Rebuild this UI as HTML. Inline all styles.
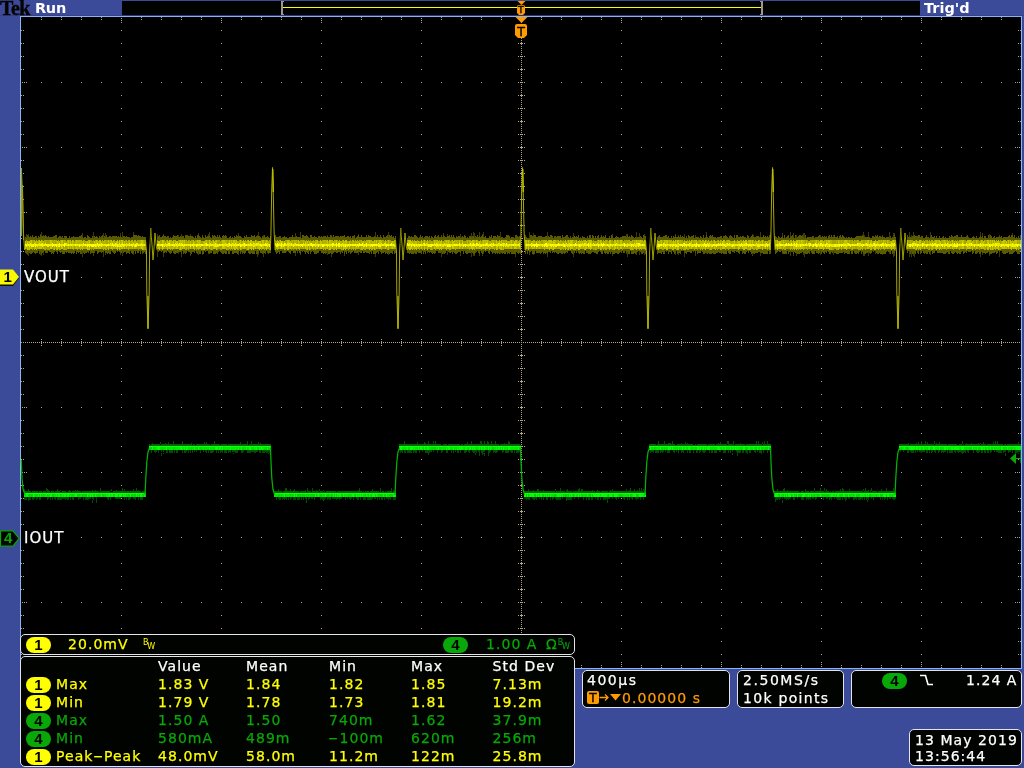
<!DOCTYPE html>
<html lang="en"><head><meta charset="utf-8"><title>Tek Run - Trig'd</title>
<style>
html,body{margin:0;padding:0}
body{width:1024px;height:768px;background:#3c4a9a;position:relative;overflow:hidden;
 font-family:"DejaVu Sans","Liberation Sans",sans-serif;font-size:14px;line-height:18px;color:#fff;letter-spacing:1.05px;-webkit-text-stroke:.25px currentColor}
#gfx{position:absolute;left:0;top:0}
.t{position:absolute;white-space:nowrap}
.y{color:#ffff00}.g{color:#08a808}.o{color:#ff9a00}
.box{position:absolute;background:#000300;border:1px solid #e4e4e8;border-radius:5px;box-sizing:border-box}
.pill{position:absolute;width:25px;height:16px;border-radius:8px;color:#000;text-align:center;line-height:15px;font-size:15px;letter-spacing:0;-webkit-text-stroke:0;font-family:"Liberation Sans","DejaVu Sans",sans-serif;font-weight:bold}
.pill.y{background:#ffff00;color:#000}.pill.g{background:#08a808;color:#000}
.tek{font-family:"Liberation Serif","DejaVu Serif",serif;font-weight:bold;font-size:20px;color:#060400;letter-spacing:-.6px;-webkit-text-stroke:.4px #060400}
.n{font-family:"Liberation Sans","DejaVu Sans",sans-serif;font-weight:bold;font-size:15px;letter-spacing:0;-webkit-text-stroke:0}
.bb{font-weight:bold;font-size:14.5px;letter-spacing:-.3px;-webkit-text-stroke:0}
.b{-webkit-text-stroke:.35px currentColor}
#txt{position:absolute;left:0;top:0;width:1024px;height:768px;will-change:transform}
.hy{display:inline-block;transform:scaleX(2);margin:0 2.2px}
</style></head><body>
<svg id="gfx" width="1024" height="768" viewBox="0 0 1024 768" shape-rendering="crispEdges">
<!-- top bar -->
<rect x="122" y="1" width="798" height="14" fill="#000300"/>
<rect x="0" y="15" width="1024" height="1" fill="#34408e"/>
<rect x="122" y="15" width="798" height="1" fill="#2a3480"/>
<rect x="283" y="7" width="478" height="1" fill="#ffff00"/>
<path d="M281 1h3v1h-1v12h1v1h-3z" fill="#a09494"/>
<path d="M763 1h-3v1h1v12h-1v1h3z" fill="#a09494"/>
<!-- graticule frame -->
<rect x="20" y="16" width="1002" height="653" fill="#86b6f6"/>
<rect x="21" y="17" width="1000" height="651" fill="#000"/>
<g stroke="#b4a680" stroke-width="1" fill="none">
<path d="M121.5 30V660" stroke-dasharray="1 12"/>
<path d="M121.5 18V23" stroke-dasharray="1 1"/>
<path d="M121.5 662V667" stroke-dasharray="1 1"/>
<path d="M221.5 30V660" stroke-dasharray="1 12"/>
<path d="M221.5 18V23" stroke-dasharray="1 1"/>
<path d="M221.5 662V667" stroke-dasharray="1 1"/>
<path d="M321.5 30V660" stroke-dasharray="1 12"/>
<path d="M321.5 18V23" stroke-dasharray="1 1"/>
<path d="M321.5 662V667" stroke-dasharray="1 1"/>
<path d="M421.5 30V660" stroke-dasharray="1 12"/>
<path d="M421.5 18V23" stroke-dasharray="1 1"/>
<path d="M421.5 662V667" stroke-dasharray="1 1"/>
<path d="M621.5 30V660" stroke-dasharray="1 12"/>
<path d="M621.5 18V23" stroke-dasharray="1 1"/>
<path d="M621.5 662V667" stroke-dasharray="1 1"/>
<path d="M721.5 30V660" stroke-dasharray="1 12"/>
<path d="M721.5 18V23" stroke-dasharray="1 1"/>
<path d="M721.5 662V667" stroke-dasharray="1 1"/>
<path d="M821.5 30V660" stroke-dasharray="1 12"/>
<path d="M821.5 18V23" stroke-dasharray="1 1"/>
<path d="M821.5 662V667" stroke-dasharray="1 1"/>
<path d="M921.5 30V660" stroke-dasharray="1 12"/>
<path d="M921.5 18V23" stroke-dasharray="1 1"/>
<path d="M921.5 662V667" stroke-dasharray="1 1"/>
<path d="M41 82.5H1010" stroke-dasharray="1 19"/>
<path d="M22 82.5H27" stroke-dasharray="1 1"/>
<path d="M1015 82.5H1020" stroke-dasharray="1 1"/>
<path d="M41 147.5H1010" stroke-dasharray="1 19"/>
<path d="M22 147.5H27" stroke-dasharray="1 1"/>
<path d="M1015 147.5H1020" stroke-dasharray="1 1"/>
<path d="M41 212.5H1010" stroke-dasharray="1 19"/>
<path d="M22 212.5H27" stroke-dasharray="1 1"/>
<path d="M1015 212.5H1020" stroke-dasharray="1 1"/>
<path d="M41 277.5H1010" stroke-dasharray="1 19"/>
<path d="M22 277.5H27" stroke-dasharray="1 1"/>
<path d="M1015 277.5H1020" stroke-dasharray="1 1"/>
<path d="M41 407.5H1010" stroke-dasharray="1 19"/>
<path d="M22 407.5H27" stroke-dasharray="1 1"/>
<path d="M1015 407.5H1020" stroke-dasharray="1 1"/>
<path d="M41 472.5H1010" stroke-dasharray="1 19"/>
<path d="M22 472.5H27" stroke-dasharray="1 1"/>
<path d="M1015 472.5H1020" stroke-dasharray="1 1"/>
<path d="M41 537.5H1010" stroke-dasharray="1 19"/>
<path d="M22 537.5H27" stroke-dasharray="1 1"/>
<path d="M1015 537.5H1020" stroke-dasharray="1 1"/>
<path d="M41 602.5H1010" stroke-dasharray="1 19"/>
<path d="M22 602.5H27" stroke-dasharray="1 1"/>
<path d="M1015 602.5H1020" stroke-dasharray="1 1"/>
<path d="M41 17.5H102" stroke-dasharray="1 19"/>
<path d="M141 17.5H202" stroke-dasharray="1 19"/>
<path d="M241 17.5H302" stroke-dasharray="1 19"/>
<path d="M341 17.5H402" stroke-dasharray="1 19"/>
<path d="M441 17.5H502" stroke-dasharray="1 19"/>
<path d="M541 17.5H602" stroke-dasharray="1 19"/>
<path d="M641 17.5H702" stroke-dasharray="1 19"/>
<path d="M741 17.5H802" stroke-dasharray="1 19"/>
<path d="M841 17.5H902" stroke-dasharray="1 19"/>
<path d="M941 17.5H1002" stroke-dasharray="1 19"/>
<path d="M41 19.5H102" stroke-dasharray="1 19"/>
<path d="M141 19.5H202" stroke-dasharray="1 19"/>
<path d="M241 19.5H302" stroke-dasharray="1 19"/>
<path d="M341 19.5H402" stroke-dasharray="1 19"/>
<path d="M441 19.5H502" stroke-dasharray="1 19"/>
<path d="M541 19.5H602" stroke-dasharray="1 19"/>
<path d="M641 19.5H702" stroke-dasharray="1 19"/>
<path d="M741 19.5H802" stroke-dasharray="1 19"/>
<path d="M841 19.5H902" stroke-dasharray="1 19"/>
<path d="M941 19.5H1002" stroke-dasharray="1 19"/>
<path d="M41 665.5H102" stroke-dasharray="1 19"/>
<path d="M141 665.5H202" stroke-dasharray="1 19"/>
<path d="M241 665.5H302" stroke-dasharray="1 19"/>
<path d="M341 665.5H402" stroke-dasharray="1 19"/>
<path d="M441 665.5H502" stroke-dasharray="1 19"/>
<path d="M541 665.5H602" stroke-dasharray="1 19"/>
<path d="M641 665.5H702" stroke-dasharray="1 19"/>
<path d="M741 665.5H802" stroke-dasharray="1 19"/>
<path d="M841 665.5H902" stroke-dasharray="1 19"/>
<path d="M941 665.5H1002" stroke-dasharray="1 19"/>
<path d="M41 667.5H102" stroke-dasharray="1 19"/>
<path d="M141 667.5H202" stroke-dasharray="1 19"/>
<path d="M241 667.5H302" stroke-dasharray="1 19"/>
<path d="M341 667.5H402" stroke-dasharray="1 19"/>
<path d="M441 667.5H502" stroke-dasharray="1 19"/>
<path d="M541 667.5H602" stroke-dasharray="1 19"/>
<path d="M641 667.5H702" stroke-dasharray="1 19"/>
<path d="M741 667.5H802" stroke-dasharray="1 19"/>
<path d="M841 667.5H902" stroke-dasharray="1 19"/>
<path d="M941 667.5H1002" stroke-dasharray="1 19"/>
<path d="M21.5 30V70" stroke-dasharray="1 12"/>
<path d="M21.5 95V135" stroke-dasharray="1 12"/>
<path d="M21.5 160V200" stroke-dasharray="1 12"/>
<path d="M21.5 225V265" stroke-dasharray="1 12"/>
<path d="M21.5 290V330" stroke-dasharray="1 12"/>
<path d="M21.5 355V395" stroke-dasharray="1 12"/>
<path d="M21.5 420V460" stroke-dasharray="1 12"/>
<path d="M21.5 485V525" stroke-dasharray="1 12"/>
<path d="M21.5 550V590" stroke-dasharray="1 12"/>
<path d="M21.5 615V655" stroke-dasharray="1 12"/>
<path d="M23.5 30V70" stroke-dasharray="1 12"/>
<path d="M23.5 95V135" stroke-dasharray="1 12"/>
<path d="M23.5 160V200" stroke-dasharray="1 12"/>
<path d="M23.5 225V265" stroke-dasharray="1 12"/>
<path d="M23.5 290V330" stroke-dasharray="1 12"/>
<path d="M23.5 355V395" stroke-dasharray="1 12"/>
<path d="M23.5 420V460" stroke-dasharray="1 12"/>
<path d="M23.5 485V525" stroke-dasharray="1 12"/>
<path d="M23.5 550V590" stroke-dasharray="1 12"/>
<path d="M23.5 615V655" stroke-dasharray="1 12"/>
<path d="M1018.5 30V70" stroke-dasharray="1 12"/>
<path d="M1018.5 95V135" stroke-dasharray="1 12"/>
<path d="M1018.5 160V200" stroke-dasharray="1 12"/>
<path d="M1018.5 225V265" stroke-dasharray="1 12"/>
<path d="M1018.5 290V330" stroke-dasharray="1 12"/>
<path d="M1018.5 355V395" stroke-dasharray="1 12"/>
<path d="M1018.5 420V460" stroke-dasharray="1 12"/>
<path d="M1018.5 485V525" stroke-dasharray="1 12"/>
<path d="M1018.5 550V590" stroke-dasharray="1 12"/>
<path d="M1018.5 615V655" stroke-dasharray="1 12"/>
<path d="M1020.5 30V70" stroke-dasharray="1 12"/>
<path d="M1020.5 95V135" stroke-dasharray="1 12"/>
<path d="M1020.5 160V200" stroke-dasharray="1 12"/>
<path d="M1020.5 225V265" stroke-dasharray="1 12"/>
<path d="M1020.5 290V330" stroke-dasharray="1 12"/>
<path d="M1020.5 355V395" stroke-dasharray="1 12"/>
<path d="M1020.5 420V460" stroke-dasharray="1 12"/>
<path d="M1020.5 485V525" stroke-dasharray="1 12"/>
<path d="M1020.5 550V590" stroke-dasharray="1 12"/>
<path d="M1020.5 615V655" stroke-dasharray="1 12"/>
<path d="M521.5 18V667" stroke-dasharray="1 1"/>
<path d="M21 342.5H1020" stroke-dasharray="1 1"/>
<path d="M518.5 30V330" stroke-dasharray="1 12"/>
<path d="M518.5 355V660" stroke-dasharray="1 12"/>
<path d="M520.5 30V330" stroke-dasharray="1 12"/>
<path d="M520.5 355V660" stroke-dasharray="1 12"/>
<path d="M521.5 30V330" stroke-dasharray="1 12"/>
<path d="M521.5 355V660" stroke-dasharray="1 12"/>
<path d="M522.5 30V330" stroke-dasharray="1 12"/>
<path d="M522.5 355V660" stroke-dasharray="1 12"/>
<path d="M524.5 30V330" stroke-dasharray="1 12"/>
<path d="M524.5 355V660" stroke-dasharray="1 12"/>
<path d="M41 339.5H502" stroke-dasharray="1 19"/>
<path d="M541 339.5H1010" stroke-dasharray="1 19"/>
<path d="M41 341.5H502" stroke-dasharray="1 19"/>
<path d="M541 341.5H1010" stroke-dasharray="1 19"/>
<path d="M41 342.5H502" stroke-dasharray="1 19"/>
<path d="M541 342.5H1010" stroke-dasharray="1 19"/>
<path d="M41 343.5H502" stroke-dasharray="1 19"/>
<path d="M541 343.5H1010" stroke-dasharray="1 19"/>
<path d="M41 345.5H502" stroke-dasharray="1 19"/>
<path d="M541 345.5H1010" stroke-dasharray="1 19"/>
</g>
<g shape-rendering="auto">
<g shape-rendering="crispEdges" fill="none" stroke-width="1" transform="translate(.5 0)">
<path d="M26 234V254M27 235V255M28 234V256M40 234V255M41 232V256M43 235V255M82 233V257M93 232V256M103 233V257M105 233V255M120 233V255M122 232V256M133 232V255M157 234V257M163 234V257M178 235V254M181 234V257M190 234V256M198 233V255M202 235V255M208 234V254M209 232V254M238 233V255M257 235V257M258 232V255M263 235V257M295 233V256M300 232V255M327 235V255M331 235V257M344 235V256M358 234V255M375 232V257M388 232V255M441 235V257M443 233V254M447 234V255M460 234V256M471 233V257M473 232V256M474 233V256M479 232V256M482 234V256M483 232V254M500 232V254M515 235V257M529 232V255M533 233V255M547 232V257M573 233V257M601 235V254M612 234V256M626 234V254M627 234V257M636 232V255M639 233V255M644 234V255M675 234V255M678 235V255M684 234V257M695 235V256M706 232V254M752 234V256M753 235V254M760 232V256M770 232V254M782 233V254M790 232V256M793 233V256M796 235V256M803 233V255M804 233V257M820 235V255M833 235V255M863 232V256M864 235V256M868 232V256M875 235V254M882 235V255M889 232V254M893 233V257M894 233V256M909 232V257M911 235V257M913 232V256M914 235V257M930 232V255M980 232V257M982 233V255M989 234V256M999 235V257M1012 233V254" stroke="#3c3c00"/>
<path d="M25 237V253M26 238V253M27 235V254M28 236V252M29 237V253M30 236V254M31 237V254M32 235V253M33 237V252M34 237V253M35 236V254M36 236V253M37 238V253M38 236V251M39 237V254M40 235V252M41 236V254M42 236V253M43 236V252M44 236V251M45 235V253M46 236V253M47 237V253M48 236V251M49 237V252M50 237V252M51 237V254M52 237V253M53 236V254M54 236V252M55 235V251M56 235V252M57 238V254M58 237V251M59 236V252M60 236V253M61 237V252M62 236V254M63 238V254M64 236V254M65 236V252M66 236V253M67 238V252M68 238V253M69 236V253M70 238V253M71 237V254M72 237V253M73 236V254M74 237V253M75 237V251M76 237V254M77 237V252M78 237V253M79 236V252M80 236V254M81 235V254M82 237V251M83 238V253M84 237V254M85 237V253M86 238V253M87 235V252M88 236V253M89 237V251M90 238V254M91 238V253M92 236V253M93 238V253M94 236V253M95 237V251M96 236V251M97 237V254M98 238V253M99 236V252M100 237V252M101 236V253M102 235V252M103 238V252M104 236V251M105 237V253M106 235V253M107 237V254M108 237V253M109 236V254M110 236V254M111 237V251M112 236V252M113 236V253M114 236V254M115 236V253M116 236V251M117 237V252M118 236V251M119 237V252M120 236V253M121 237V253M122 238V251M123 236V253M124 236V252M125 237V252M126 236V254M127 237V253M128 237V253M129 237V254M130 238V251M131 237V253M132 237V254M133 235V253M134 235V251M135 235V254M136 235V251M137 236V253M138 235V253M139 236V251M140 236V254M141 237V251M142 236V254M143 237V253M144 237V252M145 237V254M157 237V251M158 236V252M159 235V251M160 237V251M161 237V252M162 236V251M163 235V253M164 236V253M165 236V252M166 237V253M167 236V251M168 236V252M169 238V253M170 237V254M171 238V253M172 237V251M173 235V253M174 236V254M175 236V254M176 236V253M177 235V253M178 237V252M179 237V252M180 236V252M181 237V254M182 236V251M183 236V254M184 238V253M185 235V254M186 235V253M187 235V251M188 236V252M189 236V252M190 236V253M191 236V254M192 236V252M193 237V252M194 238V253M195 236V251M196 238V253M197 235V254M198 235V252M199 236V254M200 237V254M201 238V251M202 235V254M203 237V254M204 238V251M205 235V252M206 237V251M207 236V251M208 236V253M209 236V254M210 237V253M211 238V253M212 235V251M213 236V254M214 235V254M215 236V254M216 237V253M217 235V254M218 237V252M219 235V251M220 237V252M221 238V253M222 236V254M223 235V254M224 236V253M225 235V254M226 236V254M227 238V251M228 238V254M229 237V254M230 236V251M231 238V251M232 237V254M233 238V254M234 236V253M235 237V253M236 235V253M237 236V254M238 236V253M239 236V251M240 236V254M241 237V252M242 238V254M243 238V253M244 236V254M245 237V253M246 235V251M247 237V251M248 237V253M249 237V254M250 237V254M251 235V253M252 236V254M253 236V254M254 235V254M255 237V251M256 236V254M257 236V254M258 236V253M259 236V251M260 237V253M261 238V253M262 236V254M263 237V253M264 235V253M265 237V254M266 237V251M267 236V253M268 237V254M269 238V253M270 236V253M275 235V252M276 237V254M277 237V253M278 237V252M279 236V254M280 236V251M281 238V251M282 237V253M283 237V253M284 236V253M285 237V253M286 237V252M287 238V251M288 238V252M289 237V253M290 237V254M291 237V251M292 235V251M293 237V253M294 237V253M295 237V253M296 236V251M297 237V253M298 237V251M299 237V253M300 237V254M301 238V251M302 235V252M303 235V251M304 236V252M305 236V254M306 235V252M307 236V253M308 237V254M309 238V251M310 235V254M311 235V252M312 237V251M313 237V252M314 236V254M315 237V254M316 237V254M317 238V253M318 236V253M319 236V251M320 237V251M321 236V253M322 237V253M323 236V254M324 236V253M325 236V254M326 237V253M327 236V251M328 237V254M329 237V254M330 235V253M331 236V254M332 237V254M333 235V253M334 237V252M335 236V252M336 236V253M337 236V253M338 236V252M339 237V252M340 236V254M341 236V252M342 236V253M343 236V251M344 235V254M345 237V252M346 237V254M347 236V251M348 236V253M349 237V252M350 236V254M351 238V253M352 236V252M353 236V251M354 235V253M355 238V253M356 237V253M357 236V253M358 235V252M359 237V252M360 237V253M361 235V253M362 237V251M363 237V253M364 237V253M365 237V252M366 235V253M367 237V253M368 235V253M369 236V254M370 236V252M371 237V254M372 237V251M373 237V254M374 236V254M375 237V254M376 237V253M377 235V252M378 237V254M379 237V251M380 235V252M381 237V254M382 238V253M383 235V253M384 237V252M385 237V254M386 236V253M387 235V254M388 237V253M389 235V254M390 236V253M391 235V253M392 237V254M393 236V251M394 238V254M395 236V253M407 238V253M408 236V253M409 236V254M410 237V253M411 236V254M412 237V254M413 237V254M414 235V253M415 235V254M416 236V254M417 237V252M418 238V253M419 237V253M420 235V253M421 237V254M422 236V251M423 238V254M424 237V252M425 236V254M426 236V251M427 236V253M428 237V252M429 236V253M430 238V252M431 236V253M432 237V254M433 238V253M434 236V254M435 235V253M436 237V251M437 236V251M438 235V253M439 237V253M440 237V253M441 236V252M442 237V254M443 235V253M444 236V254M445 237V253M446 237V251M447 236V251M448 236V252M449 235V253M450 237V253M451 235V252M452 237V254M453 235V252M454 237V253M455 238V254M456 236V254M457 237V253M458 236V252M459 236V252M460 238V253M461 237V251M462 236V251M463 237V254M464 235V251M465 236V253M466 238V254M467 237V254M468 238V253M469 236V253M470 236V253M471 237V252M472 236V253M473 236V254M474 238V254M475 236V253M476 237V252M477 235V251M478 237V253M479 236V254M480 237V251M481 236V253M482 235V254M483 237V252M484 237V251M485 236V252M486 238V251M487 238V251M488 238V253M489 236V254M490 237V251M491 235V252M492 238V254M493 236V253M494 236V253M495 236V254M496 237V253M497 235V254M498 236V253M499 236V254M500 238V252M501 237V253M502 237V254M503 238V253M504 238V254M505 237V254M506 235V252M507 235V254M508 235V253M509 236V254M510 238V252M511 237V254M512 237V254M513 237V254M514 238V254M515 235V254M516 235V252M517 236V253M518 237V254M519 236V253M520 237V254M525 235V254M526 237V251M527 238V254M528 238V251M529 238V253M530 235V252M531 235V251M532 236V254M533 236V254M534 235V254M535 235V251M536 237V253M537 237V253M538 236V253M539 236V253M540 236V254M541 236V253M542 237V252M543 237V254M544 237V253M545 236V254M546 236V253M547 237V254M548 236V252M549 237V252M550 235V253M551 235V251M552 236V253M553 238V252M554 236V253M555 236V252M556 237V253M557 236V254M558 236V254M559 236V253M560 236V253M561 238V254M562 235V254M563 237V253M564 237V254M565 236V253M566 235V252M567 235V253M568 237V251M569 238V251M570 236V251M571 238V253M572 237V254M573 237V251M574 236V253M575 237V251M576 236V253M577 237V251M578 235V253M579 238V254M580 237V253M581 238V254M582 236V253M583 237V254M584 237V254M585 238V251M586 238V253M587 236V253M588 238V254M589 235V254M590 235V254M591 238V253M592 235V252M593 236V252M594 238V253M595 236V253M596 238V254M597 236V254M598 235V252M599 238V251M600 237V252M601 235V254M602 237V254M603 236V251M604 237V253M605 235V254M606 238V253M607 238V254M608 238V254M609 236V252M610 238V254M611 235V252M612 236V254M613 238V254M614 238V254M615 237V253M616 236V253M617 237V254M618 237V254M619 238V253M620 237V252M621 237V253M622 236V251M623 236V253M624 236V253M625 236V251M626 237V253M627 235V252M628 237V254M629 236V254M630 237V251M631 235V254M632 236V254M633 237V254M634 238V253M635 237V254M636 238V253M637 237V252M638 237V251M639 237V251M640 236V252M641 237V254M642 238V254M643 235V253M644 236V251M645 236V254M657 237V254M658 236V253M659 235V253M660 237V253M661 237V254M662 237V252M663 236V254M664 236V254M665 235V251M666 235V252M667 237V251M668 236V254M669 238V252M670 238V252M671 236V254M672 238V251M673 236V252M674 237V254M675 235V253M676 237V251M677 237V254M678 236V253M679 237V253M680 235V254M681 237V251M682 236V251M683 237V251M684 237V253M685 238V253M686 236V254M687 238V252M688 235V252M689 236V252M690 237V253M691 236V253M692 236V251M693 235V252M694 238V251M695 237V253M696 237V251M697 237V254M698 237V253M699 238V253M700 236V253M701 237V251M702 238V252M703 235V254M704 238V254M705 237V253M706 235V252M707 237V254M708 238V253M709 236V254M710 235V254M711 236V254M712 235V253M713 237V254M714 237V254M715 237V254M716 238V253M717 237V253M718 237V252M719 237V253M720 236V253M721 236V254M722 238V253M723 236V254M724 236V254M725 235V254M726 236V254M727 237V251M728 238V253M729 236V254M730 235V254M731 236V251M732 237V252M733 238V252M734 235V253M735 238V251M736 235V252M737 235V252M738 237V253M739 237V254M740 236V251M741 237V251M742 236V254M743 236V253M744 237V254M745 237V254M746 238V252M747 235V251M748 236V253M749 238V251M750 237V252M751 236V254M752 235V253M753 237V253M754 237V254M755 237V253M756 236V253M757 236V253M758 236V252M759 237V252M760 237V253M761 237V253M762 237V253M763 235V254M764 237V254M765 236V254M766 237V254M767 236V254M768 237V251M769 235V254M770 235V253M775 236V254M776 237V253M777 238V252M778 236V251M779 237V252M780 238V252M781 237V251M782 236V253M783 238V254M784 235V254M785 238V254M786 237V254M787 236V251M788 235V254M789 238V252M790 237V251M791 236V252M792 235V252M793 237V254M794 238V252M795 235V253M796 238V253M797 237V254M798 236V254M799 235V254M800 235V253M801 236V253M802 235V252M803 237V253M804 238V253M805 235V254M806 238V254M807 237V254M808 237V253M809 237V254M810 237V251M811 237V253M812 236V254M813 236V254M814 238V254M815 237V251M816 237V253M817 237V253M818 236V254M819 235V253M820 237V251M821 237V254M822 236V252M823 237V253M824 236V254M825 237V252M826 236V253M827 238V251M828 236V252M829 235V254M830 237V254M831 235V252M832 237V253M833 237V251M834 235V253M835 237V253M836 237V254M837 236V254M838 238V254M839 236V253M840 235V253M841 237V253M842 235V253M843 236V252M844 237V254M845 238V253M846 237V253M847 238V254M848 237V254M849 237V254M850 238V251M851 237V254M852 238V254M853 238V251M854 238V253M855 237V254M856 236V254M857 236V253M858 236V254M859 236V252M860 236V251M861 236V254M862 235V252M863 236V254M864 237V254M865 237V254M866 237V253M867 237V253M868 237V252M869 237V253M870 238V254M871 238V253M872 236V251M873 236V252M874 237V251M875 236V251M876 236V253M877 235V254M878 237V254M879 236V253M880 236V254M881 237V254M882 236V254M883 237V254M884 237V254M885 238V254M886 237V252M887 237V251M888 237V252M889 238V252M890 236V254M891 238V251M892 237V254M893 237V253M894 235V253M895 237V251M907 235V253M908 237V251M909 236V251M910 237V254M911 237V252M912 236V254M913 236V254M914 235V253M915 236V254M916 236V251M917 236V253M918 235V254M919 235V251M920 237V254M921 236V253M922 236V251M923 238V253M924 238V254M925 237V253M926 235V254M927 237V254M928 237V252M929 238V254M930 237V252M931 235V251M932 237V254M933 237V253M934 236V253M935 238V251M936 236V251M937 238V253M938 238V253M939 236V253M940 238V253M941 238V253M942 237V253M943 236V254M944 238V254M945 237V254M946 238V253M947 238V252M948 238V254M949 236V254M950 237V251M951 235V253M952 236V254M953 237V254M954 236V253M955 236V252M956 235V253M957 235V254M958 237V253M959 237V254M960 237V254M961 235V252M962 237V251M963 237V254M964 237V253M965 237V252M966 236V253M967 235V251M968 237V252M969 238V252M970 238V252M971 238V251M972 237V254M973 236V253M974 237V251M975 238V254M976 236V254M977 238V253M978 238V252M979 237V254M980 236V254M981 237V252M982 236V253M983 238V253M984 236V253M985 236V254M986 238V253M987 238V253M988 235V252M989 238V254M990 235V254M991 236V254M992 238V253M993 237V253M994 236V253M995 238V252M996 237V254M997 237V253M998 237V251M999 236V252M1000 237V251M1001 236V251M1002 238V253M1003 237V254M1004 237V254M1005 237V254M1006 237V253M1007 237V253M1008 236V252M1009 235V254M1010 237V254M1011 235V254M1012 235V254M1013 237V253M1014 235V252M1015 238V251M1016 237V252M1017 238V254M1018 236V254M1019 238V254M1020 235V251" stroke="#5a5a00"/>
<path d="M26 240V249M32 240V250M33 240V249M42 240V249M44 240V250M46 240V249M47 240V250M48 240V250M49 240V250M52 240V249M53 240V250M55 240V249M60 240V250M63 240V250M65 240V250M66 241V250M69 240V249M71 241V249M74 241V249M84 240V249M90 240V249M91 240V250M92 241V249M93 240V250M101 241V249M106 240V250M107 240V249M109 240V249M115 241V249M118 241V249M120 240V250M123 240V249M125 240V249M127 241V249M130 241V249M133 241V249M136 241V249M137 240V249M138 240V250M139 240V249M144 240V250M145 240V250M157 240V249M160 240V249M161 240V249M164 240V249M165 241V249M166 240V249M174 240V249M178 240V249M185 240V250M187 241V249M189 240V249M191 240V249M192 240V249M195 240V249M196 240V250M201 241V250M202 241V250M207 240V250M208 240V249M210 240V250M212 240V250M217 240V250M218 240V249M219 240V249M220 241V250M221 240V250M227 240V250M228 240V250M230 240V250M232 240V250M238 241V250M239 240V249M241 240V250M246 241V250M254 241V249M256 240V249M261 240V250M264 240V250M269 240V250M275 240V250M279 240V249M283 241V249M285 240V250M286 240V249M291 240V250M293 240V250M297 240V249M300 240V249M301 240V249M302 240V249M304 240V249M308 240V249M310 240V250M311 241V249M314 241V249M318 241V249M319 241V249M322 240V249M328 241V250M337 240V249M342 240V250M347 241V249M348 241V250M350 240V249M351 241V250M354 241V249M359 240V249M360 240V250M364 240V250M375 240V250M377 240V249M378 240V249M382 240V249M383 240V249M384 241V249M386 241V249M387 240V250M389 240V249M390 240V249M395 241V249M407 240V250M417 240V249M419 241V250M420 241V249M422 241V250M423 240V249M425 240V249M426 241V249M428 241V249M429 240V249M430 240V250M432 241V250M433 240V249M442 241V249M444 240V249M451 240V249M458 240V249M460 240V249M461 240V249M463 241V249M464 241V249M465 241V249M466 240V249M468 240V249M475 240V249M481 241V250M488 240V249M491 240V249M494 240V250M495 240V249M498 241V249M502 240V250M504 240V249M512 240V249M513 240V249M517 240V249M520 240V249M527 240V249M529 240V249M530 240V249M531 241V249M535 241V249M537 240V249M541 240V249M542 240V249M556 240V249M557 240V249M561 240V250M563 240V250M564 241V249M566 241V249M567 240V250M569 240V249M573 240V250M574 240V250M575 240V250M577 241V249M587 240V249M592 241V249M593 240V250M594 241V250M596 241V250M597 240V249M599 240V249M602 241V249M607 240V249M608 241V249M611 240V249M612 240V250M613 241V250M616 240V249M619 240V250M622 240V250M623 241V249M624 240V249M625 240V249M626 240V249M627 240V249M628 240V249M633 240V250M662 240V250M663 240V250M668 240V249M676 240V250M679 240V249M681 240V250M682 240V249M683 241V250M687 240V250M688 241V250M692 240V249M693 240V249M697 241V250M698 240V249M699 240V249M706 240V249M709 241V250M712 241V249M713 240V249M716 241V249M717 240V250M719 241V249M721 240V250M725 241V250M726 240V249M731 241V249M735 241V249M736 241V249M740 240V249M741 240V249M747 241V250M751 240V249M753 240V250M754 241V250M761 240V249M763 240V249M764 241V249M766 241V249M768 240V249M776 240V249M782 240V250M784 240V250M786 240V249M787 240V249M788 240V249M789 241V249M792 241V250M805 240V249M807 240V250M808 241V249M810 240V249M811 240V250M812 240V249M813 240V249M814 240V249M817 240V249M825 240V249M832 240V250M833 240V250M834 240V249M835 240V249M837 240V250M840 240V249M842 240V249M843 240V249M848 240V249M850 240V249M851 240V250M853 241V249M855 240V249M856 240V249M859 241V250M863 240V249M864 240V249M866 240V249M869 240V249M872 241V249M880 240V250M882 240V249M886 240V249M889 240V249M895 240V249M908 240V249M909 240V249M911 240V249M912 240V249M915 240V250M921 240V249M922 241V249M923 240V249M925 240V249M926 240V249M928 241V250M930 241V249M934 240V249M941 240V250M946 240V250M949 240V249M951 240V249M953 240V250M955 240V249M957 240V249M958 241V249M964 240V249M965 240V249M971 240V249M974 240V249M975 240V250M978 240V249M979 241V250M980 240V249M985 240V250M986 240V249M989 240V249M991 240V250M993 240V250M999 241V250M1000 240V250M1007 240V249M1009 240V249M1012 240V249M1017 240V249M1019 240V249" stroke="#a4a400"/>
<path d="M28 241V250M30 240V249M34 240V250M36 240V250M37 241V249M38 240V249M45 240V250M54 240V250M56 240V250M58 240V249M59 241V250M64 240V250M67 240V249M73 240V250M75 240V249M77 240V250M78 240V249M79 240V249M80 240V250M81 240V249M82 241V250M83 240V249M85 241V249M86 241V249M88 240V250M95 240V249M97 240V249M98 241V249M102 240V249M103 241V250M104 240V249M105 240V250M110 240V249M112 241V250M113 240V249M114 240V249M126 240V249M128 240V250M129 240V249M131 240V249M132 240V249M134 240V249M135 240V249M140 240V249M143 240V250M168 241V249M170 240V250M171 240V249M172 241V250M175 240V249M179 240V250M181 240V250M183 240V249M186 240V250M188 240V250M194 241V250M198 240V250M200 240V249M203 241V250M205 240V249M211 241V250M215 240V249M225 240V249M226 240V250M235 240V250M237 241V250M242 241V249M244 241V249M245 240V249M247 240V250M249 241V249M252 241V249M257 241V249M265 240V249M267 240V249M268 241V249M276 241V249M277 240V250M289 240V249M292 240V249M294 240V249M295 240V249M296 240V250M299 241V250M303 240V249M306 240V250M312 241V249M313 240V250M315 240V250M316 240V249M323 240V250M324 240V249M325 240V250M326 240V249M331 240V249M332 240V249M333 241V250M334 240V250M335 240V249M338 241V249M339 240V249M340 241V249M341 241V250M344 241V249M352 240V249M353 240V250M355 240V250M356 241V249M357 240V249M358 241V249M361 240V250M362 241V250M365 241V250M366 240V249M367 240V249M368 240V249M370 240V249M371 240V250M372 241V250M373 241V249M381 240V250M391 241V249M393 241V249M394 240V249M412 240V250M413 241V249M414 240V250M431 241V250M435 240V250M436 240V249M439 240V250M443 241V249M445 240V249M447 240V249M449 240V250M450 241V250M454 240V249M455 240V250M456 240V249M457 240V249M467 240V249M469 240V250M470 240V249M474 240V250M477 240V249M478 241V249M480 240V249M482 240V249M484 240V249M486 240V249M489 241V250M490 241V249M492 240V249M493 240V249M497 241V250M500 241V250M503 240V250M505 240V249M506 240V249M507 241V249M508 241V249M509 241V249M510 240V249M518 241V249M519 240V249M533 240V249M534 240V249M538 241V249M539 240V249M540 241V249M543 240V249M544 240V250M545 240V249M546 240V249M548 240V249M552 241V250M555 240V249M558 240V249M559 241V249M560 240V250M562 241V249M579 240V250M581 240V249M582 241V249M583 240V249M584 240V250M588 240V249M595 241V250M601 240V250M603 240V250M604 241V249M605 240V250M606 240V250M618 240V250M629 240V249M630 241V250M631 241V250M632 240V250M634 240V249M635 240V249M637 240V249M638 240V249M639 240V250M641 240V250M642 240V249M643 241V249M659 241V249M660 240V249M665 240V249M669 240V249M670 240V249M671 240V249M672 241V250M674 241V249M680 240V249M684 240V250M685 241V250M689 240V249M690 241V249M694 240V250M695 240V249M700 240V250M701 241V249M702 240V250M703 240V249M704 241V249M707 241V249M708 240V249M710 241V250M711 240V250M715 241V250M718 240V249M720 240V250M727 240V249M728 240V250M729 240V249M730 241V249M732 241V249M733 241V249M737 240V249M742 241V249M748 240V250M749 240V250M755 240V249M756 241V250M757 241V250M759 240V249M760 241V249M767 241V250M769 240V250M770 240V249M775 240V249M778 241V249M781 240V249M785 240V250M790 240V250M791 240V249M795 241V249M798 240V250M800 240V250M803 240V250M804 240V249M806 240V249M809 241V249M815 240V249M818 240V250M819 241V249M822 240V249M824 240V249M827 240V249M830 240V250M831 240V250M836 240V250M839 240V249M841 240V250M847 240V249M849 240V249M852 240V250M854 240V249M857 240V249M858 240V250M860 241V250M861 240V249M862 240V250M865 240V250M870 240V250M873 241V249M876 241V249M878 240V250M879 240V249M881 240V249M884 240V250M885 240V249M888 240V249M890 241V249M892 240V249M894 240V250M910 240V249M917 241V249M918 241V250M927 240V249M929 240V250M931 240V250M932 240V250M933 241V249M937 240V249M938 240V249M942 240V249M943 240V249M945 240V249M947 240V249M950 241V249M954 241V249M959 240V250M960 240V249M961 240V249M966 241V250M973 240V249M977 240V249M982 240V249M984 240V250M995 241V250M996 240V249M1001 241V249M1005 240V249M1014 240V249M1018 240V250" stroke="#b4b400"/>
<path d="M25 241V249M27 241V250M29 241V250M31 240V249M35 241V249M39 240V249M40 241V249M41 240V249M43 241V249M50 240V249M51 240V249M57 241V250M61 240V249M62 240V249M68 240V249M70 240V249M72 240V249M76 240V249M87 241V250M89 240V250M94 241V249M96 240V249M99 240V249M100 240V249M108 240V250M111 240V249M116 241V249M117 240V250M119 240V250M121 240V249M122 240V249M124 241V249M141 240V249M142 240V250M158 241V249M159 241V250M162 240V250M163 240V249M167 240V250M169 240V249M173 240V249M176 241V249M177 241V249M180 240V250M182 240V249M184 240V249M190 241V249M193 240V249M197 240V249M199 240V249M204 241V250M206 240V249M209 240V249M213 240V249M214 241V249M216 240V250M222 240V249M223 240V249M224 240V249M229 240V249M231 240V249M233 240V249M234 240V250M236 240V249M240 240V250M243 240V249M248 240V250M250 240V249M251 240V250M253 241V250M255 240V249M258 241V249M259 241V250M260 241V249M262 240V249M263 240V249M266 240V250M270 241V250M278 241V249M280 240V249M281 241V249M282 241V249M284 241V250M287 240V250M288 240V250M290 241V249M298 240V249M305 241V249M307 241V250M309 241V250M317 240V249M320 240V249M321 241V249M327 240V249M329 240V250M330 240V250M336 240V250M343 240V250M345 240V250M346 240V249M349 241V249M363 241V249M369 240V250M374 240V250M376 240V249M379 240V249M380 240V249M385 240V249M388 240V250M392 241V249M408 240V249M409 240V250M410 240V250M411 241V249M415 241V249M416 241V250M418 241V249M421 240V249M424 240V250M427 240V250M434 240V249M437 240V249M438 241V249M440 241V249M441 240V250M446 240V250M448 240V249M452 240V249M453 241V249M459 240V249M462 240V249M471 241V249M472 240V250M473 240V249M476 240V249M479 241V249M483 240V249M485 240V250M487 240V249M496 240V250M499 240V249M501 240V250M511 240V249M514 241V249M515 240V249M516 240V249M525 240V250M526 240V249M528 240V250M532 241V249M536 241V249M547 241V249M549 240V250M550 240V249M551 240V249M553 240V250M554 240V249M565 240V250M568 240V250M570 240V250M571 240V249M572 240V249M576 240V249M578 241V250M580 241V249M585 240V250M586 241V249M589 240V249M590 240V250M591 240V249M598 240V249M600 240V250M609 240V250M610 240V249M614 240V250M615 240V249M617 240V249M620 240V249M621 240V249M636 240V250M640 240V249M644 240V249M645 240V250M657 240V249M658 241V250M661 240V249M664 240V249M666 240V250M667 240V250M673 240V250M675 240V249M677 240V250M678 240V250M686 241V249M691 240V249M696 240V249M705 240V250M714 240V249M722 241V249M723 240V249M724 240V249M734 240V249M738 241V250M739 241V249M743 240V250M744 241V250M745 240V249M746 240V249M750 240V250M752 240V249M758 240V249M762 240V250M765 241V249M777 240V250M779 241V249M780 241V249M783 240V249M793 240V249M794 241V250M796 240V250M797 240V249M799 240V249M801 240V249M802 240V249M816 240V249M820 240V249M821 240V249M823 241V250M826 240V249M828 240V249M829 240V250M838 240V250M844 240V249M845 240V249M846 240V250M867 240V249M868 240V249M871 240V250M874 241V250M875 240V250M877 241V249M883 240V249M887 240V249M891 241V250M893 240V249M907 240V249M913 241V249M914 241V249M916 240V250M919 240V249M920 240V250M924 241V249M935 240V249M936 240V250M939 240V250M940 241V249M944 240V249M948 241V249M952 240V249M956 241V249M962 240V249M963 240V249M967 240V249M968 240V249M969 240V249M970 240V249M972 241V250M976 240V249M981 240V249M983 241V249M987 240V250M988 240V250M990 240V250M992 240V250M994 240V249M997 241V249M998 240V250M1002 241V249M1003 240V249M1004 240V249M1006 241V249M1008 240V249M1010 240V249M1011 241V250M1013 241V249M1015 240V249M1016 240V250M1020 240V249" stroke="#c4c400"/>
<path d="M27 243V246M29 244V247M34 243V246M37 244V247M39 243V246M43 244V246M45 243V246M51 244V246M57 244V246M60 244V246M61 244V247M62 244V246M66 243V246M67 244V246M69 244V246M72 244V246M73 244V246M74 244V246M76 244V246M78 244V246M81 244V246M82 244V247M86 244V246M96 244V247M103 244V246M104 244V246M109 244V246M110 243V246M111 244V246M116 243V246M118 244V247M119 243V247M121 244V247M125 244V246M126 243V247M127 244V246M128 244V246M130 244V246M133 243V246M134 244V247M137 243V246M139 244V246M141 243V246M143 244V246M145 243V246M159 244V246M163 244V246M164 244V247M165 243V246M166 244V247M170 244V246M171 244V246M175 243V246M177 243V247M183 244V247M185 244V246M187 244V246M189 244V246M191 244V246M193 243V247M195 244V246M200 244V247M203 244V246M204 244V246M205 243V246M208 244V246M210 243V246M213 244V246M214 244V247M216 244V247M218 244V247M221 244V246M223 244V247M224 244V246M225 243V246M227 244V247M228 243V247M232 243V246M235 243V247M239 243V246M247 244V246M252 244V246M253 243V247M254 243V247M255 244V246M257 243V246M258 243V246M259 244V246M262 244V246M267 243V247M268 244V246M270 243V246M279 243V246M282 244V246M286 244V246M287 243V246M288 243V247M289 243V246M290 244V246M292 244V246M294 243V246M295 243V246M300 244V247M303 243V246M304 244V246M305 243V247M306 244V246M307 244V246M309 244V246M315 243V247M316 244V246M317 244V246M319 244V246M320 244V246M321 244V246M325 244V246M329 244V247M330 244V246M335 244V246M337 244V246M340 244V246M342 243V246M344 244V247M346 244V246M349 244V247M351 244V246M356 244V247M363 244V247M367 244V246M369 244V246M381 243V246M384 243V246M389 244V246M392 244V246M394 244V247M395 244V247M410 244V246M412 243V246M415 244V246M417 244V247M422 244V246M423 243V246M425 244V246M426 243V246M434 243V246M438 244V247M441 244V246M442 244V247M443 244V247M444 243V246M446 244V246M451 244V246M452 244V247M458 244V246M460 244V247M461 244V246M462 243V246M466 244V246M467 244V246M468 244V247M471 244V247M475 244V247M479 243V247M484 244V246M488 244V247M491 243V247M492 244V247M494 244V246M495 244V246M497 244V247M498 243V246M499 243V246M502 243V246M504 243V246M505 244V247M507 244V247M508 244V247M510 244V246M514 243V246M516 244V246M517 244V246M519 243V247M525 244V246M527 244V246M529 244V246M530 244V246M540 244V246M541 244V246M543 244V246M548 243V246M549 244V246M560 244V246M565 244V247M566 243V246M567 244V247M568 244V246M569 243V247M572 244V246M577 244V246M582 243V246M583 244V247M585 243V246M589 244V246M591 244V246M592 244V246M593 243V246M595 244V246M597 243V246M600 244V246M605 244V246M606 244V246M608 244V247M609 244V247M611 244V246M613 244V246M614 244V246M616 243V246M617 244V246M618 244V246M619 244V246M621 244V246M623 243V246M626 244V247M627 243V247M629 244V246M630 243V246M634 243V246M635 244V247M636 243V247M637 243V246M641 244V246M644 244V246M645 244V246M657 244V247M662 244V246M664 243V246M667 244V246M668 244V246M669 244V246M674 244V246M677 244V247M678 243V247M690 243V246M691 244V247M693 244V247M700 244V246M701 244V247M709 243V247M710 244V246M711 244V247M726 243V247M730 244V246M731 244V247M734 244V247M736 244V246M738 244V246M745 243V246M754 244V246M755 244V246M756 243V246M764 244V247M768 244V246M769 243V247M770 244V246M775 244V247M776 244V246M778 244V246M783 244V246M784 244V247M792 244V246M795 244V247M798 244V247M799 244V246M804 244V246M807 244V246M808 243V246M811 244V246M812 244V247M818 243V246M819 244V247M824 244V246M827 243V247M828 244V247M831 244V247M832 244V247M833 244V247M836 244V247M843 243V247M846 244V247M847 243V246M851 244V246M856 244V246M858 243V246M859 243V247M860 243V246M864 244V246M865 243V246M868 244V246M869 244V247M870 243V247M872 244V247M877 243V246M879 244V247M884 244V246M889 244V247M890 244V246M891 243V247M892 243V246M893 244V247M895 244V246M907 243V246M908 244V246M914 243V246M919 244V246M920 244V246M921 244V246M924 244V246M925 244V246M928 244V246M929 244V246M930 243V246M940 243V246M943 244V246M948 244V247M952 243V247M958 244V246M960 244V246M964 244V246M965 244V246M967 244V247M968 244V246M970 243V246M972 244V246M973 244V246M975 244V246M976 244V246M979 244V247M981 244V246M982 243V247M984 244V246M985 244V247M988 243V246M994 244V246M997 243V246M998 243V247M999 243V246M1000 244V247M1004 244V247M1009 244V246M1011 244V247M1014 244V247M1019 244V246" stroke="#e8e800"/>
<path d="M26 244V247M30 243V246M31 244V247M32 244V247M36 244V246M38 244V246M40 244V246M42 243V247M47 244V247M48 244V247M49 244V246M50 244V246M54 244V247M58 244V247M63 244V246M65 243V246M70 244V246M71 244V246M77 244V246M80 244V246M83 243V246M84 244V246M98 244V247M100 244V246M101 243V247M102 244V246M105 244V246M106 244V247M107 244V246M113 244V247M114 244V246M115 243V247M120 244V247M122 243V246M123 244V247M124 244V246M129 243V246M132 244V247M136 243V247M138 244V246M140 244V246M142 244V246M144 244V246M160 244V246M167 244V246M168 243V246M173 244V246M174 244V247M178 244V246M179 243V246M180 244V246M181 243V246M186 244V246M188 244V246M194 244V246M198 244V246M199 244V246M209 244V247M211 244V246M212 244V246M215 243V247M217 244V247M220 244V246M226 244V246M230 244V246M231 244V247M233 244V246M234 244V246M236 244V246M237 244V246M241 244V247M242 244V246M243 243V246M248 244V246M249 244V246M250 243V246M251 244V246M256 243V246M263 244V246M264 244V246M276 244V247M280 244V246M283 244V247M285 243V246M291 243V246M293 244V247M296 244V246M297 244V246M299 244V246M310 243V246M314 244V246M324 244V246M326 244V246M327 244V247M328 244V246M331 244V246M333 243V246M334 244V246M341 244V247M343 244V247M347 244V247M353 244V246M354 244V246M358 244V247M364 244V247M365 244V246M368 244V246M370 244V247M377 244V246M378 243V247M379 244V247M380 244V247M382 244V246M383 244V246M385 243V246M409 243V246M418 244V246M419 244V247M421 244V246M427 244V246M428 244V247M429 244V247M433 244V246M435 244V246M436 243V247M439 244V246M445 244V246M448 244V247M450 244V247M453 244V246M457 244V246M463 244V247M464 244V246M469 244V246M477 243V246M480 244V247M481 244V247M482 244V246M487 243V246M489 244V246M496 244V246M503 243V247M509 244V246M511 244V246M512 244V246M515 244V246M520 244V246M528 244V246M531 243V247M532 244V246M538 244V246M539 244V246M542 244V247M547 244V247M551 244V247M553 244V247M554 244V246M555 244V247M556 244V247M562 244V246M563 243V247M573 244V246M574 244V247M576 244V246M578 244V246M580 244V247M581 244V246M584 243V246M586 244V246M587 244V246M590 243V247M596 244V246M599 244V246M604 244V246M612 244V247M620 244V246M622 244V246M625 244V246M628 244V246M632 244V246M633 244V247M640 244V246M643 244V246M663 243V247M665 244V247M666 244V246M670 244V247M671 244V246M672 244V247M675 244V247M676 244V247M679 244V246M683 243V246M684 243V247M686 244V247M687 244V246M689 243V247M692 244V247M695 244V247M697 244V246M699 244V247M702 244V246M703 244V247M707 243V246M712 244V247M715 244V246M718 243V246M720 243V246M721 244V246M722 243V246M725 244V247M727 243V246M728 244V246M729 243V246M735 244V246M737 244V246M740 244V247M742 244V247M743 244V246M747 244V246M748 244V247M751 244V247M752 244V246M757 244V247M758 244V247M759 244V247M760 244V246M761 244V246M763 244V246M765 244V247M766 243V246M777 244V247M779 243V246M782 244V246M787 244V246M793 244V246M797 244V246M801 244V246M802 244V246M805 244V246M806 243V246M809 243V247M814 244V246M817 244V247M821 243V246M823 244V246M826 243V246M830 244V246M834 244V247M837 244V247M840 244V246M844 244V246M845 244V246M848 243V246M850 244V247M853 244V246M854 244V246M855 244V246M861 244V246M862 244V247M866 243V246M871 244V246M873 243V246M875 244V247M878 244V246M883 243V247M885 243V246M887 244V246M888 244V246M894 243V246M909 244V247M911 244V246M912 243V247M913 243V246M915 243V246M916 244V246M918 244V246M923 243V246M931 244V246M932 243V247M934 243V246M935 243V246M936 244V247M938 244V246M939 244V246M944 244V247M945 243V246M946 244V246M947 243V247M949 244V247M951 244V246M953 244V247M955 244V247M961 244V246M963 244V246M966 243V246M969 243V246M977 244V246M980 243V247M983 244V246M986 244V246M987 244V246M990 244V247M991 244V246M992 244V247M993 243V246M995 243V247M996 243V246M1002 244V246M1005 244V246M1007 244V247M1010 244V246M1012 243V247M1013 244V247M1015 244V247M1018 244V246" stroke="#f4f400"/>
<path d="M25 244V246M28 244V246M33 244V247M35 244V247M41 244V246M44 244V246M46 244V246M52 243V247M53 244V246M55 244V246M56 244V247M59 243V247M64 243V247M68 244V246M75 244V246M79 244V247M85 244V246M87 244V247M88 244V246M89 244V247M90 244V246M91 244V247M92 244V247M93 244V247M94 244V246M95 244V247M97 243V246M99 244V246M108 244V246M112 243V246M117 244V247M131 244V246M135 244V247M157 244V246M158 244V246M161 244V246M162 244V247M169 243V246M172 244V246M176 244V246M182 244V246M184 244V246M190 244V247M192 244V246M196 244V247M197 244V246M201 244V246M202 244V246M206 243V246M207 244V246M219 244V246M222 244V246M229 243V246M238 244V246M240 244V247M244 243V247M245 244V246M246 244V246M260 244V246M261 244V247M265 243V246M266 244V246M269 244V247M275 243V246M277 243V247M278 244V246M281 243V247M284 243V246M298 244V246M301 244V246M302 244V247M308 244V246M311 243V246M312 244V247M313 244V246M318 244V247M322 244V247M323 244V247M332 243V247M336 243V247M338 243V247M339 243V247M345 244V247M348 244V246M350 244V246M352 244V246M355 244V246M357 244V246M359 243V246M360 244V246M361 244V246M362 243V246M366 243V247M371 244V246M372 244V247M373 244V246M374 244V246M375 244V246M376 244V246M386 244V247M387 244V246M388 244V246M390 244V246M391 243V246M393 244V246M407 243V246M408 244V246M411 244V247M413 244V246M414 244V247M416 244V246M420 244V246M424 243V246M430 244V247M431 244V247M432 244V246M437 244V246M440 244V246M447 244V247M449 244V247M454 244V246M455 244V246M456 244V246M459 243V246M465 244V247M470 243V246M472 244V246M473 243V246M474 244V246M476 243V246M478 244V246M483 244V246M485 244V246M486 243V246M490 244V246M493 243V246M500 244V246M501 244V246M506 243V246M513 244V246M518 244V246M526 244V246M533 244V246M534 244V247M535 244V246M536 243V247M537 244V247M544 244V247M545 243V246M546 243V247M550 244V246M552 244V246M557 244V246M558 243V246M559 244V246M561 244V246M564 244V247M570 244V246M571 244V246M575 243V246M579 244V247M588 243V247M594 244V246M598 244V247M601 243V246M602 244V247M603 243V246M607 244V246M610 244V246M615 244V246M624 243V247M631 244V247M638 243V247M639 243V246M642 244V246M658 244V247M659 244V247M660 244V246M661 244V246M673 244V246M680 244V246M681 244V246M682 244V247M685 244V246M688 244V246M694 244V246M696 243V247M698 244V247M704 243V246M705 244V247M706 244V247M708 244V247M713 244V246M714 244V246M716 244V247M717 244V246M719 244V246M723 244V246M724 244V246M732 244V247M733 244V246M739 244V246M741 243V246M744 244V246M746 243V246M749 244V246M750 244V246M753 244V246M762 244V246M767 244V247M780 244V246M781 244V246M785 244V246M786 243V246M788 243V246M789 244V246M790 244V246M791 243V246M794 243V246M796 243V247M800 244V247M803 244V246M810 243V246M813 244V247M815 243V246M816 244V247M820 243V246M822 244V247M825 244V247M829 244V247M835 244V247M838 244V246M839 244V247M841 244V247M842 244V246M849 244V246M852 244V246M857 243V246M863 244V246M867 244V246M874 243V246M876 244V246M880 244V246M881 244V247M882 243V246M886 244V247M910 244V247M917 244V247M922 243V247M926 244V247M927 244V246M933 244V246M937 244V247M941 244V246M942 244V247M950 244V246M954 243V247M956 244V247M957 243V247M959 244V246M962 243V246M971 243V246M974 244V247M978 244V246M989 244V247M1001 244V247M1003 244V246M1006 244V246M1008 244V247M1016 244V246M1017 244V247M1020 244V247" stroke="#ffff00"/>
</g>
<path d="M145.5 240 L146.5 252 L146.8 292 L148 329 L149.2 292 L149.6 252 L150 244" stroke="#a8a800" stroke-width="1" fill="none" stroke-linejoin="round"/>
<path d="M150 244 L150.8 228 L151.5 238" stroke="#808000" stroke-width="1" fill="none"/>
<path d="M151.5 238 L152.2 247 L153 260 L154 248 L155 233 L156 244 L157 250" stroke="#a0a000" stroke-width="1" fill="none"/>
<path d="M148 296 V328" stroke="#b8b800" stroke-width="1.2" fill="none"/>
<path d="M395.5 240 L396.5 252 L396.8 292 L398 329 L399.2 292 L399.6 252 L400 244" stroke="#a8a800" stroke-width="1" fill="none" stroke-linejoin="round"/>
<path d="M400 244 L400.8 228 L401.5 238" stroke="#808000" stroke-width="1" fill="none"/>
<path d="M401.5 238 L402.2 247 L403 260 L404 248 L405 233 L406 244 L407 250" stroke="#a0a000" stroke-width="1" fill="none"/>
<path d="M398 296 V328" stroke="#b8b800" stroke-width="1.2" fill="none"/>
<path d="M645.5 240 L646.5 252 L646.8 292 L648 329 L649.2 292 L649.6 252 L650 244" stroke="#a8a800" stroke-width="1" fill="none" stroke-linejoin="round"/>
<path d="M650 244 L650.8 228 L651.5 238" stroke="#808000" stroke-width="1" fill="none"/>
<path d="M651.5 238 L652.2 247 L653 260 L654 248 L655 233 L656 244 L657 250" stroke="#a0a000" stroke-width="1" fill="none"/>
<path d="M648 296 V328" stroke="#b8b800" stroke-width="1.2" fill="none"/>
<path d="M895.5 240 L896.5 252 L896.8 292 L898 329 L899.2 292 L899.6 252 L900 244" stroke="#a8a800" stroke-width="1" fill="none" stroke-linejoin="round"/>
<path d="M900 244 L900.8 228 L901.5 238" stroke="#808000" stroke-width="1" fill="none"/>
<path d="M901.5 238 L902.2 247 L903 260 L904 248 L905 233 L906 244 L907 250" stroke="#a0a000" stroke-width="1" fill="none"/>
<path d="M898 296 V328" stroke="#b8b800" stroke-width="1.2" fill="none"/>
<path d="M270.3 250 L270.9 236 L271.7 190 L272.5 167.5 L273.4 200 L274.1 232 L275.1 250" stroke="#a8a800" stroke-width="1" fill="none" stroke-linejoin="round"/>
<path d="M272.8 169 L273.3 192" stroke="#c8c800" stroke-width="1.2" fill="none"/>
<path d="M520.3 250 L520.9 236 L521.7 190 L522.5 167.5 L523.4 200 L524.1 232 L525.1 250" stroke="#a8a800" stroke-width="1" fill="none" stroke-linejoin="round"/>
<path d="M522.8 169 L523.3 192" stroke="#c8c800" stroke-width="1.2" fill="none"/>
<path d="M770.3 250 L770.9 236 L771.7 190 L772.5 167.5 L773.4 200 L774.1 232 L775.1 250" stroke="#a8a800" stroke-width="1" fill="none" stroke-linejoin="round"/>
<path d="M772.8 169 L773.3 192" stroke="#c8c800" stroke-width="1.2" fill="none"/>
<path d="M21.5 170 L22.6 200 L23.4 232 L24.6 250" stroke="#a8a800" stroke-width="1" fill="none" stroke-linejoin="round"/>
<path d="M21.5 168V236M22.5 185L23.5 240" stroke="#a0a000" stroke-width="1" fill="none"/>
<g shape-rendering="crispEdges" fill="none" stroke-width="1" transform="translate(.5 0)">
<path d="M24 489V491M28 489V491M46 488V491M47 489V491M48 490V491M57 489V491M60 490V491M69 490V491M75 490V491M77 490V491M92 490V491M95 490V491M100 488V491M110 490V491M111 489V491M116 490V491M122 488V491M124 489V491M133 489V491M136 488V491M138 490V491M145 489V491M278 489V491M285 488V491M286 488V491M290 489V491M293 490V491M294 489V491M305 490V491M307 488V491M312 488V491M316 490V491M319 489V491M323 490V491M358 490V491M359 488V491M372 489V491M380 488V491M391 488V491M393 490V491M528 489V491M533 490V491M537 489V491M538 489V491M543 490V491M555 489V491M560 488V491M566 490V491M567 489V491M578 489V491M579 488V491M581 489V491M582 489V491M592 490V491M597 490V491M610 490V491M612 489V491M626 489V491M629 490V491M630 488V491M634 489V491M637 490V491M639 488V491M641 488V491M643 489V491M645 489V491M777 489V491M783 489V491M784 488V491M787 490V491M805 489V491M814 488V491M820 488V491M824 488V491M826 489V491M840 489V491M842 488V491M843 489V491M849 489V491M863 489V491M865 488V491M868 490V491M870 490V491M871 488V491M881 489V491M886 488V491M893 488V491M152 443V444M160 442V444M165 443V444M168 442V444M173 441V444M182 441V444M191 443V444M204 442V444M206 442V444M214 441V444M240 442V444M247 441V444M251 441V444M258 442V444M260 443V444M404 441V444M417 442V444M424 442V444M425 443V444M428 441V444M433 441V444M435 441V444M467 442V444M471 441V444M480 441V444M481 441V444M484 441V444M487 441V444M488 442V444M491 441V444M495 441V444M504 443V444M508 441V444M509 442V444M658 441V444M664 441V444M668 443V444M669 443V444M670 443V444M672 441V444M681 443V444M685 442V444M687 443V444M718 443V444M720 442V444M727 441V444M728 441V444M733 441V444M740 443V444M756 441V444M758 441V444M762 442V444M764 441V444M767 441V444M908 443V444M916 443V444M918 442V444M921 441V444M925 441V444M927 442V444M934 441V444M936 443V444M939 442V444M962 441V444M966 443V444M971 443V444M978 443V444M980 443V444M983 442V444M993 442V444M995 441V444M997 441V444M1018 442V444" stroke="#005000"/>
<path d="M24 491V493M25 491V493M26 491V493M27 491V493M28 491V493M29 491V493M30 491V493M31 492V493M32 491V493M33 491V493M34 491V493M35 491V493M36 491V493M37 491V493M38 492V493M39 491V493M40 491V493M41 491V493M42 492V493M43 491V493M44 491V493M45 491V493M46 492V493M47 491V493M48 491V493M49 491V493M50 492V493M51 491V493M52 491V493M53 491V493M54 492V493M55 491V493M56 491V493M57 491V493M58 491V493M59 491V493M60 492V493M61 492V493M62 491V493M63 491V493M64 491V493M65 491V493M66 492V493M67 492V493M68 491V493M69 491V493M70 491V493M71 492V493M72 491V493M73 491V493M74 491V493M75 491V493M76 491V493M77 491V493M78 491V493M79 491V493M80 491V493M81 492V493M82 491V493M83 491V493M84 491V493M85 491V493M86 491V493M87 491V493M88 491V493M89 491V493M90 491V493M91 491V493M92 491V493M93 491V493M94 491V493M95 491V493M96 491V493M97 491V493M98 491V493M99 492V493M100 491V493M101 491V493M102 491V493M103 491V493M104 491V493M105 491V493M106 491V493M107 491V493M108 491V493M109 491V493M110 492V493M111 492V493M112 492V493M113 491V493M114 491V493M115 491V493M116 491V493M117 491V493M118 491V493M119 491V493M120 491V493M121 491V493M122 491V493M123 491V493M124 491V493M125 491V493M126 491V493M127 491V493M128 491V493M129 491V493M130 491V493M131 491V493M132 491V493M133 491V493M134 491V493M135 491V493M136 491V493M137 491V493M138 491V493M139 491V493M140 491V493M141 492V493M142 491V493M143 491V493M144 491V493M145 492V493M274 491V493M275 491V493M276 491V493M277 491V493M278 491V493M279 491V493M280 491V493M281 491V493M282 492V493M283 491V493M284 491V493M285 491V493M286 491V493M287 491V493M288 491V493M289 491V493M290 491V493M291 491V493M292 491V493M293 491V493M294 491V493M295 491V493M296 491V493M297 491V493M298 491V493M299 492V493M300 491V493M301 491V493M302 491V493M303 491V493M304 491V493M305 491V493M306 492V493M307 491V493M308 491V493M309 491V493M310 491V493M311 492V493M312 491V493M313 491V493M314 491V493M315 491V493M316 491V493M317 491V493M318 491V493M319 492V493M320 491V493M321 491V493M322 491V493M323 492V493M324 491V493M325 492V493M326 491V493M327 491V493M328 491V493M329 491V493M330 491V493M331 491V493M332 491V493M333 491V493M334 491V493M335 491V493M336 492V493M337 491V493M338 491V493M339 491V493M340 491V493M341 491V493M342 491V493M343 491V493M344 491V493M345 491V493M346 491V493M347 491V493M348 491V493M349 491V493M350 491V493M351 491V493M352 491V493M353 491V493M354 491V493M355 491V493M356 491V493M357 491V493M358 491V493M359 491V493M360 491V493M361 491V493M362 492V493M363 491V493M364 492V493M365 491V493M366 491V493M367 491V493M368 491V493M369 492V493M370 491V493M371 491V493M372 491V493M373 491V493M374 491V493M375 491V493M376 491V493M377 491V493M378 491V493M379 492V493M380 491V493M381 492V493M382 491V493M383 491V493M384 492V493M385 491V493M386 492V493M387 491V493M388 491V493M389 491V493M390 491V493M391 491V493M392 492V493M393 491V493M394 491V493M395 491V493M524 491V493M525 491V493M526 491V493M527 491V493M528 491V493M529 491V493M530 491V493M531 491V493M532 491V493M533 491V493M534 491V493M535 491V493M536 491V493M537 491V493M538 491V493M539 491V493M540 491V493M541 491V493M542 491V493M543 491V493M544 491V493M545 491V493M546 491V493M547 491V493M548 491V493M549 491V493M550 491V493M551 491V493M552 491V493M553 491V493M554 491V493M555 492V493M556 491V493M557 491V493M558 491V493M559 491V493M560 491V493M561 491V493M562 491V493M563 491V493M564 491V493M565 492V493M566 491V493M567 491V493M568 491V493M569 491V493M570 491V493M571 491V493M572 492V493M573 491V493M574 491V493M575 491V493M576 491V493M577 491V493M578 491V493M579 491V493M580 491V493M581 491V493M582 491V493M583 491V493M584 491V493M585 491V493M586 491V493M587 491V493M588 491V493M589 491V493M590 491V493M591 491V493M592 491V493M593 491V493M594 491V493M595 492V493M596 491V493M597 491V493M598 491V493M599 491V493M600 492V493M601 491V493M602 491V493M603 491V493M604 491V493M605 491V493M606 491V493M607 491V493M608 492V493M609 491V493M610 491V493M611 491V493M612 491V493M613 491V493M614 491V493M615 491V493M616 491V493M617 491V493M618 491V493M619 491V493M620 491V493M621 491V493M622 491V493M623 491V493M624 491V493M625 491V493M626 491V493M627 491V493M628 491V493M629 491V493M630 491V493M631 491V493M632 491V493M633 491V493M634 491V493M635 491V493M636 491V493M637 491V493M638 491V493M639 491V493M640 491V493M641 491V493M642 491V493M643 492V493M644 491V493M645 491V493M774 491V493M775 491V493M776 491V493M777 491V493M778 491V493M779 491V493M780 491V493M781 491V493M782 491V493M783 491V493M784 491V493M785 491V493M786 491V493M787 491V493M788 491V493M789 491V493M790 491V493M791 491V493M792 491V493M793 491V493M794 491V493M795 491V493M796 491V493M797 491V493M798 491V493M799 492V493M800 492V493M801 491V493M802 491V493M803 491V493M804 492V493M805 491V493M806 491V493M807 491V493M808 491V493M809 492V493M810 491V493M811 491V493M812 491V493M813 491V493M814 492V493M815 491V493M816 491V493M817 491V493M818 491V493M819 491V493M820 491V493M821 491V493M822 491V493M823 491V493M824 492V493M825 491V493M826 491V493M827 491V493M828 491V493M829 492V493M830 491V493M831 492V493M832 491V493M833 491V493M834 492V493M835 491V493M836 491V493M837 491V493M838 491V493M839 491V493M840 491V493M841 491V493M842 491V493M843 491V493M844 491V493M845 491V493M846 491V493M847 491V493M848 491V493M849 491V493M850 491V493M851 491V493M852 491V493M853 491V493M854 491V493M855 491V493M856 491V493M857 491V493M858 491V493M859 491V493M860 491V493M861 491V493M862 491V493M863 492V493M864 491V493M865 491V493M866 491V493M867 491V493M868 491V493M869 492V493M870 491V493M871 492V493M872 491V493M873 491V493M874 491V493M875 491V493M876 491V493M877 492V493M878 491V493M879 491V493M880 491V493M881 491V493M882 491V493M883 491V493M884 491V493M885 491V493M886 491V493M887 491V493M888 491V493M889 491V493M890 491V493M891 491V493M892 491V493M893 491V493M894 491V493M895 492V493M149 444V446M150 445V446M151 444V446M152 444V446M153 444V446M154 444V446M155 444V446M156 444V446M157 444V446M158 444V446M159 444V446M160 445V446M161 444V446M162 444V446M163 444V446M164 444V446M165 444V446M166 444V446M167 444V446M168 444V446M169 444V446M170 444V446M171 444V446M172 444V446M173 444V446M174 444V446M175 444V446M176 444V446M177 444V446M178 444V446M179 444V446M180 444V446M181 444V446M182 444V446M183 444V446M184 444V446M185 444V446M186 444V446M187 444V446M188 444V446M189 444V446M190 444V446M191 444V446M192 445V446M193 444V446M194 444V446M195 445V446M196 444V446M197 444V446M198 444V446M199 444V446M200 444V446M201 444V446M202 444V446M203 444V446M204 444V446M205 444V446M206 444V446M207 444V446M208 444V446M209 444V446M210 445V446M211 444V446M212 444V446M213 444V446M214 444V446M215 444V446M216 444V446M217 444V446M218 444V446M219 444V446M220 445V446M221 444V446M222 444V446M223 444V446M224 444V446M225 444V446M226 444V446M227 445V446M228 444V446M229 444V446M230 444V446M231 444V446M232 444V446M233 444V446M234 444V446M235 444V446M236 444V446M237 444V446M238 444V446M239 444V446M240 444V446M241 444V446M242 444V446M243 444V446M244 444V446M245 444V446M246 444V446M247 444V446M248 445V446M249 444V446M250 444V446M251 444V446M252 444V446M253 444V446M254 444V446M255 444V446M256 444V446M257 444V446M258 444V446M259 444V446M260 444V446M261 444V446M262 444V446M263 444V446M264 444V446M265 444V446M266 444V446M267 444V446M268 444V446M269 444V446M270 444V446M399 444V446M400 444V446M401 444V446M402 444V446M403 444V446M404 444V446M405 444V446M406 444V446M407 444V446M408 444V446M409 444V446M410 444V446M411 444V446M412 444V446M413 444V446M414 444V446M415 444V446M416 444V446M417 444V446M418 444V446M419 444V446M420 444V446M421 444V446M422 444V446M423 444V446M424 444V446M425 444V446M426 444V446M427 444V446M428 444V446M429 444V446M430 444V446M431 444V446M432 444V446M433 444V446M434 444V446M435 444V446M436 444V446M437 444V446M438 444V446M439 444V446M440 444V446M441 445V446M442 445V446M443 444V446M444 444V446M445 444V446M446 444V446M447 445V446M448 444V446M449 444V446M450 444V446M451 444V446M452 444V446M453 444V446M454 444V446M455 444V446M456 444V446M457 444V446M458 444V446M459 444V446M460 445V446M461 444V446M462 444V446M463 445V446M464 444V446M465 444V446M466 444V446M467 444V446M468 444V446M469 444V446M470 444V446M471 444V446M472 444V446M473 444V446M474 444V446M475 444V446M476 444V446M477 444V446M478 444V446M479 444V446M480 444V446M481 444V446M482 444V446M483 444V446M484 444V446M485 444V446M486 444V446M487 444V446M488 444V446M489 444V446M490 444V446M491 444V446M492 444V446M493 444V446M494 444V446M495 444V446M496 444V446M497 444V446M498 444V446M499 445V446M500 444V446M501 444V446M502 444V446M503 444V446M504 444V446M505 444V446M506 444V446M507 444V446M508 444V446M509 444V446M510 444V446M511 444V446M512 444V446M513 444V446M514 444V446M515 444V446M516 444V446M517 444V446M518 444V446M519 444V446M520 445V446M649 444V446M650 444V446M651 444V446M652 444V446M653 444V446M654 444V446M655 444V446M656 445V446M657 444V446M658 444V446M659 444V446M660 444V446M661 444V446M662 444V446M663 444V446M664 444V446M665 444V446M666 444V446M667 444V446M668 444V446M669 444V446M670 444V446M671 444V446M672 444V446M673 444V446M674 444V446M675 445V446M676 445V446M677 444V446M678 444V446M679 444V446M680 444V446M681 444V446M682 444V446M683 444V446M684 444V446M685 444V446M686 444V446M687 444V446M688 444V446M689 444V446M690 444V446M691 444V446M692 444V446M693 445V446M694 445V446M695 444V446M696 445V446M697 444V446M698 444V446M699 444V446M700 444V446M701 444V446M702 444V446M703 444V446M704 444V446M705 444V446M706 444V446M707 445V446M708 444V446M709 444V446M710 444V446M711 444V446M712 444V446M713 444V446M714 444V446M715 445V446M716 444V446M717 444V446M718 444V446M719 444V446M720 444V446M721 444V446M722 444V446M723 444V446M724 444V446M725 444V446M726 444V446M727 445V446M728 444V446M729 444V446M730 444V446M731 444V446M732 444V446M733 444V446M734 445V446M735 444V446M736 444V446M737 444V446M738 444V446M739 444V446M740 444V446M741 444V446M742 444V446M743 444V446M744 444V446M745 445V446M746 444V446M747 444V446M748 444V446M749 444V446M750 444V446M751 444V446M752 444V446M753 444V446M754 444V446M755 444V446M756 444V446M757 444V446M758 444V446M759 444V446M760 444V446M761 444V446M762 445V446M763 444V446M764 444V446M765 444V446M766 444V446M767 444V446M768 444V446M769 444V446M770 444V446M899 444V446M900 444V446M901 444V446M902 444V446M903 444V446M904 444V446M905 444V446M906 444V446M907 444V446M908 444V446M909 445V446M910 444V446M911 444V446M912 444V446M913 444V446M914 444V446M915 444V446M916 444V446M917 444V446M918 444V446M919 444V446M920 444V446M921 444V446M922 444V446M923 444V446M924 444V446M925 444V446M926 444V446M927 444V446M928 444V446M929 444V446M930 444V446M931 444V446M932 444V446M933 444V446M934 445V446M935 444V446M936 444V446M937 444V446M938 444V446M939 444V446M940 444V446M941 444V446M942 444V446M943 444V446M944 444V446M945 444V446M946 444V446M947 445V446M948 444V446M949 444V446M950 444V446M951 444V446M952 444V446M953 444V446M954 444V446M955 444V446M956 444V446M957 445V446M958 445V446M959 444V446M960 444V446M961 444V446M962 445V446M963 444V446M964 445V446M965 444V446M966 444V446M967 444V446M968 444V446M969 444V446M970 444V446M971 444V446M972 444V446M973 444V446M974 444V446M975 444V446M976 444V446M977 444V446M978 444V446M979 444V446M980 445V446M981 444V446M982 444V446M983 444V446M984 444V446M985 444V446M986 445V446M987 444V446M988 444V446M989 444V446M990 444V446M991 444V446M992 444V446M993 444V446M994 444V446M995 444V446M996 444V446M997 444V446M998 444V446M999 444V446M1000 444V446M1001 444V446M1002 444V446M1003 445V446M1004 444V446M1005 444V446M1006 445V446M1007 444V446M1008 444V446M1009 444V446M1010 444V446M1011 444V446M1012 444V446M1013 444V446M1014 444V446M1015 444V446M1016 444V446M1017 444V446M1018 444V446M1019 444V446M1020 444V446" stroke="#006400"/>
<path d="M24 497V500M25 497V500M26 497V500M28 497V500M28 500V501M29 497V500M30 497V500M32 497V500M33 497V500M34 497V499M36 497V500M37 497V499M39 497V500M40 497V500M47 497V500M48 497V499M50 497V500M52 497V500M54 497V499M55 497V500M57 497V500M58 497V500M59 497V500M60 497V500M61 497V500M62 497V499M63 497V499M64 497V499M65 497V500M66 497V499M67 497V500M68 497V500M70 497V500M72 497V500M73 497V500M78 497V500M79 497V499M80 497V499M83 497V500M85 497V500M86 497V500M87 497V500M88 497V500M89 497V499M90 497V499M92 497V499M92 500V503M93 497V500M96 497V500M96 500V503M107 497V499M108 497V500M110 497V500M115 497V499M116 497V499M117 497V499M118 497V499M119 497V499M120 497V499M124 497V500M126 497V500M128 497V500M129 497V500M130 497V499M133 497V499M134 497V499M135 497V500M138 497V500M140 497V500M141 497V500M142 497V500M276 497V500M278 497V499M279 497V500M280 497V500M282 497V500M283 497V499M284 497V500M285 497V499M286 497V500M288 497V500M290 497V500M291 497V499M293 497V500M294 497V500M295 497V500M297 497V500M298 497V500M299 497V500M301 497V500M303 497V500M305 497V499M306 497V500M306 500V503M308 497V500M309 497V499M311 497V499M312 497V499M314 497V500M320 497V500M321 497V499M322 497V500M323 497V500M323 500V501M324 497V500M325 497V499M327 497V500M328 497V499M329 497V500M330 497V500M332 497V499M333 497V499M334 497V499M335 497V499M336 497V500M337 497V499M338 497V499M339 497V500M340 497V499M341 497V499M345 497V500M347 497V499M349 497V499M350 497V500M351 497V499M353 497V500M356 497V499M357 497V500M358 497V500M360 497V500M363 497V500M364 497V500M365 497V500M367 497V500M368 497V500M369 497V500M370 497V500M371 497V500M372 497V499M374 497V499M375 497V499M377 497V500M379 497V500M381 497V500M382 497V500M384 497V500M386 497V499M387 497V499M388 497V500M389 497V499M390 497V500M393 497V500M394 497V500M395 497V500M524 497V499M525 497V499M526 497V500M527 497V499M528 497V500M529 497V500M532 497V499M533 497V500M534 497V500M535 497V499M536 497V500M539 497V499M541 497V500M543 497V500M546 497V500M547 497V500M550 497V500M552 497V500M553 497V499M555 497V499M556 497V500M557 497V500M558 497V500M559 497V500M560 497V500M562 497V499M566 497V500M566 500V501M567 497V500M568 497V500M569 497V500M570 497V500M571 497V500M574 497V499M578 497V499M583 497V500M586 497V500M588 497V500M589 497V500M591 497V500M592 497V500M595 497V499M597 497V500M598 497V500M600 497V500M603 497V500M604 497V500M605 497V500M606 497V499M607 497V500M607 500V503M608 497V499M609 497V499M612 497V499M615 497V499M616 497V500M618 497V499M623 497V499M624 497V500M627 497V500M629 497V500M631 497V499M632 497V500M635 497V499M636 497V500M637 497V499M638 497V499M640 497V500M643 497V500M775 497V500M775 500V502M776 497V500M777 497V500M778 497V499M779 497V500M780 497V499M782 497V499M782 500V503M784 497V499M785 497V499M786 497V500M787 497V499M788 497V500M789 497V499M790 497V499M793 497V500M794 497V500M797 497V499M801 497V500M802 497V500M803 497V500M806 497V500M807 497V499M808 497V500M809 497V499M810 497V500M812 497V499M813 497V499M815 497V500M816 497V499M823 497V500M826 497V499M827 497V499M829 497V500M830 497V499M831 497V500M834 497V499M836 497V499M837 497V500M838 497V500M839 497V500M840 497V500M842 497V500M844 497V499M845 497V500M845 500V501M846 497V500M848 497V499M849 497V499M853 497V500M854 497V500M855 497V499M856 497V500M858 497V500M859 497V500M860 497V500M861 497V499M862 497V500M864 497V500M866 497V500M867 497V499M867 500V502M868 497V500M871 497V499M873 497V500M880 497V500M882 497V500M884 497V500M885 497V499M887 497V500M889 497V499M890 497V499M892 497V499M893 497V500M894 497V500M895 497V499M151 450V453M154 450V452M155 450V453M156 450V452M158 450V453M161 450V452M161 453V456M163 450V452M163 453V454M166 450V453M167 450V453M169 450V453M170 450V453M171 450V453M172 450V453M174 450V453M176 450V453M177 450V453M182 450V453M184 450V453M185 450V453M186 450V452M188 450V453M190 450V453M192 450V453M194 450V452M196 450V452M200 450V453M203 450V452M205 450V452M206 450V453M208 450V453M210 450V453M211 450V453M212 450V453M213 450V452M216 450V453M218 450V453M220 450V453M221 450V452M222 450V453M224 450V453M225 450V453M226 450V453M228 450V453M229 450V452M230 450V453M232 450V452M233 450V452M233 453V454M234 450V452M235 450V453M236 450V453M237 450V453M241 450V453M242 450V453M243 450V452M247 450V453M248 450V453M249 450V453M250 450V453M251 450V452M252 450V452M253 450V452M254 450V453M255 450V453M256 450V452M257 450V452M259 450V453M260 450V453M262 450V453M263 450V453M264 450V453M265 450V452M266 450V453M267 450V453M268 450V452M268 453V454M269 450V453M400 450V453M401 450V452M402 450V453M404 450V453M405 450V453M407 450V453M408 450V453M409 450V453M410 450V453M411 450V453M413 450V453M414 450V452M415 450V453M416 450V453M419 450V453M422 450V452M425 450V453M426 450V453M427 450V453M428 450V453M428 453V455M429 450V453M430 450V452M431 450V452M433 450V452M437 450V453M441 450V453M442 450V452M446 450V453M447 450V453M451 450V453M453 450V453M455 450V452M457 450V453M458 450V453M460 450V453M464 450V453M465 450V453M466 450V452M468 450V452M469 450V453M472 450V452M473 450V453M474 450V453M475 450V452M475 453V455M476 450V453M478 450V452M479 450V453M479 453V456M481 450V453M482 450V453M482 453V455M483 450V452M483 453V454M484 450V452M484 453V456M488 450V453M488 453V456M489 450V453M490 450V452M493 450V453M494 450V452M495 450V453M496 450V453M497 450V452M502 450V453M503 450V452M505 450V453M506 450V453M507 450V453M508 450V453M510 450V452M511 450V453M512 450V453M514 450V453M516 450V453M517 450V453M518 450V453M519 450V452M650 450V453M651 450V452M652 450V452M653 450V453M655 450V453M656 450V453M657 450V453M658 450V453M660 450V453M661 450V452M662 450V453M663 450V452M665 450V452M667 450V453M668 450V453M669 450V453M673 450V452M674 450V453M676 450V452M678 450V453M681 450V453M682 450V452M683 450V453M687 450V453M689 450V453M690 450V453M693 450V453M696 450V453M697 450V453M699 450V453M700 450V452M702 450V452M703 450V453M704 450V453M705 450V452M709 450V453M711 450V453M712 450V453M714 450V453M715 450V453M716 450V453M719 450V452M720 450V452M723 450V453M724 450V453M725 450V453M728 450V453M730 450V453M732 450V452M732 453V455M736 450V452M737 450V453M737 453V456M738 450V453M739 450V453M740 450V453M742 450V453M743 450V453M745 450V452M746 450V453M747 450V453M747 453V454M749 450V453M750 450V453M754 450V452M755 450V453M757 450V452M759 450V453M760 450V453M761 450V453M761 453V454M763 450V453M767 450V453M770 450V453M900 450V452M903 450V452M907 450V453M908 450V453M910 450V452M911 450V453M912 450V453M913 450V453M915 450V453M917 450V452M919 450V452M920 450V452M921 450V453M922 450V452M923 450V452M924 450V452M926 450V453M927 450V453M929 450V453M931 450V453M932 450V452M934 450V452M935 450V453M938 450V453M939 450V452M941 450V453M942 450V452M943 450V453M944 450V452M945 450V452M947 450V453M949 450V453M950 450V453M951 450V453M952 450V453M954 450V452M955 450V453M957 450V452M958 450V453M959 450V452M960 450V452M961 450V453M962 450V453M962 453V454M963 450V453M964 450V452M965 450V453M967 450V452M968 450V453M973 450V453M976 450V452M977 450V453M978 450V453M979 450V452M981 450V453M982 450V453M984 450V453M985 450V453M987 450V453M988 450V453M990 450V453M991 450V452M994 450V452M996 450V452M997 450V452M998 450V453M999 450V453M1000 450V453M1001 450V453M1003 450V453M1004 450V452M1005 450V452M1005 453V456M1008 450V453M1009 450V452M1010 450V452M1012 450V453M1015 450V453M1016 450V453M1017 450V453M1018 450V452M1018 453V454M1019 450V452M1020 450V453" stroke="#004c00"/>
<path d="M25 493V497M28 493V497M29 493V497M30 493V497M31 493V497M32 493V497M36 493V497M37 493V497M39 493V497M41 493V497M43 493V497M47 493V497M52 493V497M53 493V497M57 493V497M60 493V497M66 493V497M72 493V497M77 493V497M78 493V497M79 493V497M82 493V497M83 493V497M84 493V497M85 493V497M86 493V497M94 493V497M96 493V497M98 493V497M99 493V497M102 493V497M103 493V497M105 493V497M113 493V497M118 493V497M122 493V497M126 493V497M128 493V497M129 493V497M131 493V497M132 493V497M134 493V497M135 493V497M139 493V497M143 493V497M145 493V497M278 493V497M279 493V497M281 493V497M285 493V497M290 493V497M292 493V497M295 493V497M297 493V497M298 493V497M299 493V497M300 493V497M302 493V497M303 493V497M304 493V497M306 493V497M308 493V497M311 493V497M312 493V497M313 493V497M314 493V497M316 493V497M320 493V497M321 493V497M327 493V497M328 493V497M331 493V497M332 493V497M334 493V497M336 493V497M341 493V497M342 493V497M349 493V497M355 493V497M365 493V497M368 493V497M371 493V497M375 493V497M378 493V497M379 493V497M380 493V497M381 493V497M382 493V497M384 493V497M385 493V497M389 493V497M390 493V497M391 493V497M392 493V497M526 493V497M528 493V497M534 493V497M535 493V497M539 493V497M542 493V497M543 493V497M545 493V497M547 493V497M549 493V497M554 493V497M555 493V497M563 493V497M565 493V497M566 493V497M568 493V497M573 493V497M582 493V497M586 493V497M589 493V497M590 493V497M592 493V497M608 493V497M613 493V497M619 493V497M620 493V497M621 493V497M622 493V497M628 493V497M630 493V497M631 493V497M636 493V497M637 493V497M774 493V497M779 493V497M783 493V497M785 493V497M787 493V497M791 493V497M794 493V497M796 493V497M798 493V497M799 493V497M800 493V497M801 493V497M811 493V497M814 493V497M817 493V497M818 493V497M822 493V497M823 493V497M824 493V497M825 493V497M826 493V497M827 493V497M828 493V497M836 493V497M840 493V497M842 493V497M845 493V497M847 493V497M853 493V497M856 493V497M858 493V497M859 493V497M869 493V497M870 493V497M876 493V497M880 493V497M881 493V497M882 493V497M886 493V497M890 493V497M892 493V497M150 446V450M151 446V450M153 446V450M154 446V450M155 446V450M161 446V450M162 446V450M164 446V450M167 446V450M168 446V450M173 446V450M174 446V450M185 446V450M188 446V450M191 446V450M193 446V450M196 446V450M197 446V450M200 446V450M201 446V450M204 446V450M206 446V450M208 446V450M210 446V450M213 446V450M214 446V450M218 446V450M221 446V450M223 446V450M236 446V450M239 446V450M242 446V450M243 446V450M245 446V450M247 446V450M252 446V450M253 446V450M257 446V450M258 446V450M265 446V450M266 446V450M268 446V450M270 446V450M399 446V450M403 446V450M408 446V450M409 446V450M419 446V450M423 446V450M426 446V450M429 446V450M431 446V450M432 446V450M433 446V450M434 446V450M435 446V450M439 446V450M445 446V450M451 446V450M454 446V450M456 446V450M464 446V450M468 446V450M471 446V450M476 446V450M480 446V450M487 446V450M489 446V450M492 446V450M493 446V450M497 446V450M500 446V450M502 446V450M507 446V450M516 446V450M519 446V450M649 446V450M652 446V450M654 446V450M655 446V450M661 446V450M662 446V450M664 446V450M666 446V450M671 446V450M675 446V450M677 446V450M679 446V450M687 446V450M691 446V450M692 446V450M695 446V450M696 446V450M701 446V450M704 446V450M706 446V450M710 446V450M712 446V450M714 446V450M716 446V450M721 446V450M723 446V450M726 446V450M729 446V450M734 446V450M741 446V450M745 446V450M746 446V450M747 446V450M755 446V450M756 446V450M759 446V450M761 446V450M762 446V450M765 446V450M766 446V450M767 446V450M769 446V450M901 446V450M906 446V450M907 446V450M908 446V450M921 446V450M927 446V450M930 446V450M932 446V450M938 446V450M940 446V450M941 446V450M943 446V450M948 446V450M960 446V450M964 446V450M966 446V450M969 446V450M970 446V450M971 446V450M973 446V450M976 446V450M978 446V450M979 446V450M985 446V450M988 446V450M991 446V450M992 446V450M994 446V450M1000 446V450M1003 446V450M1004 446V450M1006 446V450M1011 446V450" stroke="#00d800"/>
<path d="M24 493V497M34 493V497M35 493V497M42 493V497M44 493V497M45 493V497M48 493V497M49 493V497M54 493V497M55 493V497M61 493V497M63 493V497M69 493V497M70 493V497M71 493V497M73 493V497M74 493V497M80 493V497M81 493V497M88 493V497M89 493V497M91 493V497M93 493V497M97 493V497M100 493V497M104 493V497M107 493V497M110 493V497M114 493V497M124 493V497M127 493V497M133 493V497M137 493V497M138 493V497M142 493V497M274 493V497M275 493V497M276 493V497M277 493V497M280 493V497M282 493V497M283 493V497M286 493V497M287 493V497M288 493V497M289 493V497M291 493V497M293 493V497M301 493V497M305 493V497M307 493V497M309 493V497M310 493V497M317 493V497M319 493V497M322 493V497M323 493V497M324 493V497M326 493V497M329 493V497M330 493V497M338 493V497M344 493V497M345 493V497M346 493V497M347 493V497M348 493V497M350 493V497M351 493V497M354 493V497M357 493V497M359 493V497M361 493V497M363 493V497M364 493V497M367 493V497M370 493V497M377 493V497M387 493V497M388 493V497M395 493V497M529 493V497M537 493V497M551 493V497M552 493V497M553 493V497M556 493V497M561 493V497M564 493V497M567 493V497M570 493V497M572 493V497M574 493V497M576 493V497M577 493V497M579 493V497M581 493V497M583 493V497M584 493V497M585 493V497M588 493V497M600 493V497M607 493V497M612 493V497M618 493V497M623 493V497M624 493V497M625 493V497M626 493V497M627 493V497M632 493V497M638 493V497M643 493V497M644 493V497M778 493V497M781 493V497M782 493V497M792 493V497M795 493V497M805 493V497M806 493V497M807 493V497M809 493V497M812 493V497M813 493V497M815 493V497M816 493V497M819 493V497M821 493V497M829 493V497M830 493V497M833 493V497M834 493V497M839 493V497M841 493V497M846 493V497M849 493V497M850 493V497M851 493V497M852 493V497M854 493V497M857 493V497M862 493V497M864 493V497M865 493V497M867 493V497M871 493V497M872 493V497M873 493V497M874 493V497M875 493V497M877 493V497M878 493V497M889 493V497M891 493V497M893 493V497M149 446V450M156 446V450M160 446V450M163 446V450M165 446V450M169 446V450M170 446V450M171 446V450M172 446V450M175 446V450M176 446V450M177 446V450M178 446V450M179 446V450M182 446V450M183 446V450M189 446V450M190 446V450M192 446V450M195 446V450M199 446V450M202 446V450M203 446V450M205 446V450M207 446V450M211 446V450M212 446V450M224 446V450M225 446V450M226 446V450M227 446V450M228 446V450M229 446V450M231 446V450M232 446V450M233 446V450M234 446V450M237 446V450M240 446V450M244 446V450M248 446V450M251 446V450M255 446V450M260 446V450M263 446V450M264 446V450M269 446V450M402 446V450M404 446V450M405 446V450M406 446V450M413 446V450M415 446V450M416 446V450M417 446V450M422 446V450M425 446V450M430 446V450M436 446V450M437 446V450M440 446V450M441 446V450M442 446V450M443 446V450M444 446V450M447 446V450M450 446V450M452 446V450M455 446V450M458 446V450M463 446V450M467 446V450M473 446V450M475 446V450M477 446V450M478 446V450M482 446V450M483 446V450M485 446V450M486 446V450M491 446V450M494 446V450M495 446V450M504 446V450M505 446V450M506 446V450M510 446V450M511 446V450M512 446V450M513 446V450M514 446V450M515 446V450M517 446V450M520 446V450M651 446V450M653 446V450M656 446V450M657 446V450M658 446V450M659 446V450M663 446V450M665 446V450M667 446V450M673 446V450M674 446V450M676 446V450M680 446V450M681 446V450M683 446V450M684 446V450M686 446V450M690 446V450M693 446V450M694 446V450M699 446V450M702 446V450M711 446V450M713 446V450M715 446V450M720 446V450M724 446V450M727 446V450M728 446V450M731 446V450M732 446V450M736 446V450M738 446V450M739 446V450M740 446V450M742 446V450M750 446V450M751 446V450M752 446V450M754 446V450M758 446V450M763 446V450M764 446V450M770 446V450M899 446V450M900 446V450M902 446V450M903 446V450M905 446V450M915 446V450M918 446V450M922 446V450M924 446V450M925 446V450M926 446V450M931 446V450M935 446V450M936 446V450M937 446V450M942 446V450M946 446V450M949 446V450M950 446V450M953 446V450M959 446V450M965 446V450M967 446V450M968 446V450M974 446V450M975 446V450M980 446V450M983 446V450M986 446V450M989 446V450M995 446V450M996 446V450M997 446V450M998 446V450M999 446V450M1005 446V450M1008 446V450M1009 446V450M1010 446V450M1012 446V450M1013 446V450M1014 446V450M1015 446V450M1017 446V450M1020 446V450" stroke="#00e800"/>
<path d="M26 493V497M27 493V497M33 493V497M38 493V497M40 493V497M46 493V497M50 493V497M51 493V497M56 493V497M58 493V497M59 493V497M62 493V497M64 493V497M65 493V497M67 493V497M68 493V497M75 493V497M76 493V497M87 493V497M90 493V497M92 493V497M95 493V497M101 493V497M106 493V497M108 493V497M109 493V497M111 493V497M112 493V497M115 493V497M116 493V497M117 493V497M119 493V497M120 493V497M121 493V497M123 493V497M125 493V497M130 493V497M136 493V497M140 493V497M141 493V497M144 493V497M284 493V497M294 493V497M296 493V497M315 493V497M318 493V497M325 493V497M333 493V497M335 493V497M337 493V497M339 493V497M340 493V497M343 493V497M352 493V497M353 493V497M356 493V497M358 493V497M360 493V497M362 493V497M366 493V497M369 493V497M372 493V497M373 493V497M374 493V497M376 493V497M383 493V497M386 493V497M393 493V497M394 493V497M524 493V497M525 493V497M527 493V497M530 493V497M531 493V497M532 493V497M533 493V497M536 493V497M538 493V497M540 493V497M541 493V497M544 493V497M546 493V497M548 493V497M550 493V497M557 493V497M558 493V497M559 493V497M560 493V497M562 493V497M569 493V497M571 493V497M575 493V497M578 493V497M580 493V497M587 493V497M591 493V497M593 493V497M594 493V497M595 493V497M596 493V497M597 493V497M598 493V497M599 493V497M601 493V497M602 493V497M603 493V497M604 493V497M605 493V497M606 493V497M609 493V497M610 493V497M611 493V497M614 493V497M615 493V497M616 493V497M617 493V497M629 493V497M633 493V497M634 493V497M635 493V497M639 493V497M640 493V497M641 493V497M642 493V497M645 493V497M775 493V497M776 493V497M777 493V497M780 493V497M784 493V497M786 493V497M788 493V497M789 493V497M790 493V497M793 493V497M797 493V497M802 493V497M803 493V497M804 493V497M808 493V497M810 493V497M820 493V497M831 493V497M832 493V497M835 493V497M837 493V497M838 493V497M843 493V497M844 493V497M848 493V497M855 493V497M860 493V497M861 493V497M863 493V497M866 493V497M868 493V497M879 493V497M883 493V497M884 493V497M885 493V497M887 493V497M888 493V497M894 493V497M895 493V497M152 446V450M157 446V450M158 446V450M159 446V450M166 446V450M180 446V450M181 446V450M184 446V450M186 446V450M187 446V450M194 446V450M198 446V450M209 446V450M215 446V450M216 446V450M217 446V450M219 446V450M220 446V450M222 446V450M230 446V450M235 446V450M238 446V450M241 446V450M246 446V450M249 446V450M250 446V450M254 446V450M256 446V450M259 446V450M261 446V450M262 446V450M267 446V450M400 446V450M401 446V450M407 446V450M410 446V450M411 446V450M412 446V450M414 446V450M418 446V450M420 446V450M421 446V450M424 446V450M427 446V450M428 446V450M438 446V450M446 446V450M448 446V450M449 446V450M453 446V450M457 446V450M459 446V450M460 446V450M461 446V450M462 446V450M465 446V450M466 446V450M469 446V450M470 446V450M472 446V450M474 446V450M479 446V450M481 446V450M484 446V450M488 446V450M490 446V450M496 446V450M498 446V450M499 446V450M501 446V450M503 446V450M508 446V450M509 446V450M518 446V450M650 446V450M660 446V450M668 446V450M669 446V450M670 446V450M672 446V450M678 446V450M682 446V450M685 446V450M688 446V450M689 446V450M697 446V450M698 446V450M700 446V450M703 446V450M705 446V450M707 446V450M708 446V450M709 446V450M717 446V450M718 446V450M719 446V450M722 446V450M725 446V450M730 446V450M733 446V450M735 446V450M737 446V450M743 446V450M744 446V450M748 446V450M749 446V450M753 446V450M757 446V450M760 446V450M768 446V450M904 446V450M909 446V450M910 446V450M911 446V450M912 446V450M913 446V450M914 446V450M916 446V450M917 446V450M919 446V450M920 446V450M923 446V450M928 446V450M929 446V450M933 446V450M934 446V450M939 446V450M944 446V450M945 446V450M947 446V450M951 446V450M952 446V450M954 446V450M955 446V450M956 446V450M957 446V450M958 446V450M961 446V450M962 446V450M963 446V450M972 446V450M977 446V450M981 446V450M982 446V450M984 446V450M987 446V450M990 446V450M993 446V450M1001 446V450M1002 446V450M1007 446V450M1016 446V450M1018 446V450M1019 446V450" stroke="#00ff00"/>
<path d="M23.5 493.5H145.5" stroke="#10ff10"/>
<path d="M273.5 493.5H395.5" stroke="#10ff10"/>
<path d="M523.5 493.5H645.5" stroke="#10ff10"/>
<path d="M773.5 493.5H895.5" stroke="#10ff10"/>
<path d="M148.5 446.5H270.5" stroke="#10ff10"/>
<path d="M398.5 446.5H520.5" stroke="#10ff10"/>
<path d="M648.5 446.5H770.5" stroke="#10ff10"/>
<path d="M898.5 446.5H1020.5" stroke="#10ff10"/>
</g>
<path d="M145 495 L145.8 478 L146.8 462 L148 452 L149.5 448" stroke="#00b400" stroke-width="1.25" fill="none" stroke-linejoin="round"/>
<path d="M395 495 L395.8 478 L396.8 462 L398 452 L399.5 448" stroke="#00b400" stroke-width="1.25" fill="none" stroke-linejoin="round"/>
<path d="M645 495 L645.8 478 L646.8 462 L648 452 L649.5 448" stroke="#00b400" stroke-width="1.25" fill="none" stroke-linejoin="round"/>
<path d="M895 495 L895.8 478 L896.8 462 L898 452 L899.5 448" stroke="#00b400" stroke-width="1.25" fill="none" stroke-linejoin="round"/>
<path d="M270.5 448 L271.0 462 L271.8 478 L272.9 489 L274.5 494.5" stroke="#00b400" stroke-width="1.25" fill="none" stroke-linejoin="round"/>
<path d="M520.5 448 L521.0 462 L521.8 478 L522.9 489 L524.5 494.5" stroke="#00b400" stroke-width="1.25" fill="none" stroke-linejoin="round"/>
<path d="M770.5 448 L771.0 462 L771.8 478 L772.9 489 L774.5 494.5" stroke="#00b400" stroke-width="1.25" fill="none" stroke-linejoin="round"/>
<path d="M21.3 460 L22 478 L23 489 L25 494.5" stroke="#00b400" stroke-width="1.25" fill="none" stroke-linejoin="round"/>
<path d="M1020.5 450V463" stroke="#006800" stroke-width="1" fill="none"/>
</g>
<!-- trigger position markers -->
<g shape-rendering="auto">
<path d="M517.5 1H525.5L521.5 5Z" fill="#ff9a00"/>
<path d="M517 6.5Q517 5 518.5 5H523.5Q525 5 525 6.5V13L523 15H519L517 13Z" fill="#ff9a00"/>
<path d="M515.5 17H527.5L521.5 23Z" fill="#ff9a00"/>
<path d="M515 26Q515 24 517 24H525Q527 24 527 26V35L524 38H518L515 35Z" fill="#ff9a00"/>
<!-- trigger level arrow -->
<path d="M1010 458.5L1016 453V464Z" fill="#08a808"/>
<rect x="1016" y="458" width="5" height="1" fill="#08a808"/>
<!-- ch1 marker -->
<path d="M0 271H13L19 278L13 286H0Z" fill="#101000"/>
<path d="M0 269.5H13L19 277L13 284.5H0Z" fill="#f8f800"/>
<!-- ch4 marker -->
<path d="M0.5 530.8H13L19 538.5L13 546.2H0.5Z" fill="#000300" stroke="#08a808" stroke-width="1.2"/>
</g>
</svg>
<div id="txt">
<div class="t tek" style="left:0;top:-4px;line-height:24px">Tek</div>
<div class="t bb" style="left:35px;top:-1.5px">Run</div>
<div class="t bb" style="left:924px;top:-1.5px;letter-spacing:0">Trig'd</div>
<div class="t b" style="left:517px;top:4px;font-size:9.5px;color:#000;letter-spacing:0;width:8px;text-align:center;line-height:12px">T</div>
<div class="t b" style="left:515px;top:24px;font-size:12.5px;color:#000;letter-spacing:0;width:12px;text-align:center;line-height:15px">T</div>

<div class="t n" style="left:3.5px;top:268px;color:#000">1</div>
<div class="t" style="left:22px;top:268px;background:#000;padding:0 1px 0 2px;font-size:15px;letter-spacing:1px">VOUT</div>
<div class="t n g" style="left:4px;top:529px">4</div>
<div class="t" style="left:22px;top:529px;background:#000;padding:0 1px 0 2px;font-size:15px;letter-spacing:1px">IOUT</div>

<!-- channel bar -->
<div class="box" style="left:20px;top:634px;width:555px;height:21px"></div>
<div class="pill y" style="left:26px;top:637px">1</div>
<div class="t y" style="left:68px;top:635px">20.0mV</div>
<div class="t y" style="left:143px;top:634px;font-size:8px;letter-spacing:0;-webkit-text-stroke:0">B<span style="position:relative;top:4px;left:-1px">W</span></div>
<div class="pill g" style="left:443px;top:637px">4</div>
<div class="t g" style="left:486px;top:635px">1.00 A</div>
<div class="t g" style="left:546px;top:635px">Ω<span style="font-size:8px;letter-spacing:0;position:relative;top:-4px;-webkit-text-stroke:0">B<span style="position:relative;top:4px;left:-1px">W</span></span></div>

<!-- measurement table -->
<div class="box" style="left:20px;top:656px;width:555px;height:111px"></div>
<div class="t" style="left:158px;top:657px">Value</div>
<div class="t" style="left:246px;top:657px">Mean</div>
<div class="t" style="left:329px;top:657px">Min</div>
<div class="t" style="left:411px;top:657px">Max</div>
<div class="t" style="left:492.5px;top:657px">Std Dev</div>

<div class="pill y" style="left:26px;top:677px">1</div>
<div class="t y" style="left:56px;top:675px">Max</div>
<div class="t y" style="left:158px;top:675px">1.83 V</div>
<div class="t y" style="left:246px;top:675px">1.84</div>
<div class="t y" style="left:329px;top:675px">1.82</div>
<div class="t y" style="left:411px;top:675px">1.85</div>
<div class="t y" style="left:492.5px;top:675px">7.13m</div>

<div class="pill y" style="left:26px;top:695px">1</div>
<div class="t y" style="left:56px;top:693px">Min</div>
<div class="t y" style="left:158px;top:693px">1.79 V</div>
<div class="t y" style="left:246px;top:693px">1.78</div>
<div class="t y" style="left:329px;top:693px">1.73</div>
<div class="t y" style="left:411px;top:693px">1.81</div>
<div class="t y" style="left:492.5px;top:693px">19.2m</div>

<div class="pill g" style="left:26px;top:713px">4</div>
<div class="t g" style="left:56px;top:711px">Max</div>
<div class="t g" style="left:158px;top:711px">1.50 A</div>
<div class="t g" style="left:246px;top:711px">1.50</div>
<div class="t g" style="left:329px;top:711px">740m</div>
<div class="t g" style="left:411px;top:711px">1.62</div>
<div class="t g" style="left:492.5px;top:711px">37.9m</div>

<div class="pill g" style="left:26px;top:731px">4</div>
<div class="t g" style="left:56px;top:729px">Min</div>
<div class="t g" style="left:158px;top:729px">580mA</div>
<div class="t g" style="left:246px;top:729px">489m</div>
<div class="t g" style="left:329px;top:729px"><span class="hy">-</span>100m</div>
<div class="t g" style="left:411px;top:729px">620m</div>
<div class="t g" style="left:492.5px;top:729px">256m</div>

<div class="pill y" style="left:26px;top:749px">1</div>
<div class="t y" style="left:56px;top:747px">Peak<span class="hy">-</span>Peak</div>
<div class="t y" style="left:158px;top:747px">48.0mV</div>
<div class="t y" style="left:246px;top:747px">58.0m</div>
<div class="t y" style="left:329px;top:747px">11.2m</div>
<div class="t y" style="left:411px;top:747px">122m</div>
<div class="t y" style="left:492.5px;top:747px">25.8m</div>

<!-- horizontal / acquisition / trigger boxes -->
<div class="box" style="left:582px;top:670px;width:148px;height:38px"></div>
<div class="t" style="left:587px;top:671px;letter-spacing:1.5px">400µs</div>
<div class="t o" style="left:587px;top:691px;width:12px;height:13px;background:#ff9a00;border-radius:2px"></div>
<div class="t b" style="left:587px;top:689px;width:12px;text-align:center;color:#000;font-size:12px;letter-spacing:0">T</div>
<div class="t o" style="left:622px;top:689px">0.00000 s</div>

<div class="box" style="left:737px;top:670px;width:107px;height:38px"></div>
<div class="t" style="left:743px;top:671px;letter-spacing:1.55px">2.50MS/s</div>
<div class="t" style="left:743px;top:689px;letter-spacing:1.3px">10k points</div>

<div class="box" style="left:851px;top:670px;width:171px;height:38px"></div>
<div class="pill g" style="left:882px;top:673px">4</div>
<div class="t" style="left:966px;top:671px">1.24 A</div>

<div class="box" style="left:909px;top:729px;width:113px;height:37px"></div>
<div class="t" style="left:915px;top:731px">13 May 2019</div>
<div class="t" style="left:915px;top:747px">13:56:44</div>
</div>
<svg id="gfx2" width="1024" height="768" viewBox="0 0 1024 768" style="position:absolute;left:0;top:0;pointer-events:none">
<path d="M920 675.5H925.5L928 684.5H933" stroke="#fff" stroke-width="1.6" fill="none"/>
<path d="M599.5 697.5H608M605 694.5L608 697.5L605 700.5" stroke="#ff9a00" stroke-width="1.3" fill="none"/>
<path d="M610 694H621L615.5 700.5Z" fill="#ff9a00"/>
</svg>
</body></html>
